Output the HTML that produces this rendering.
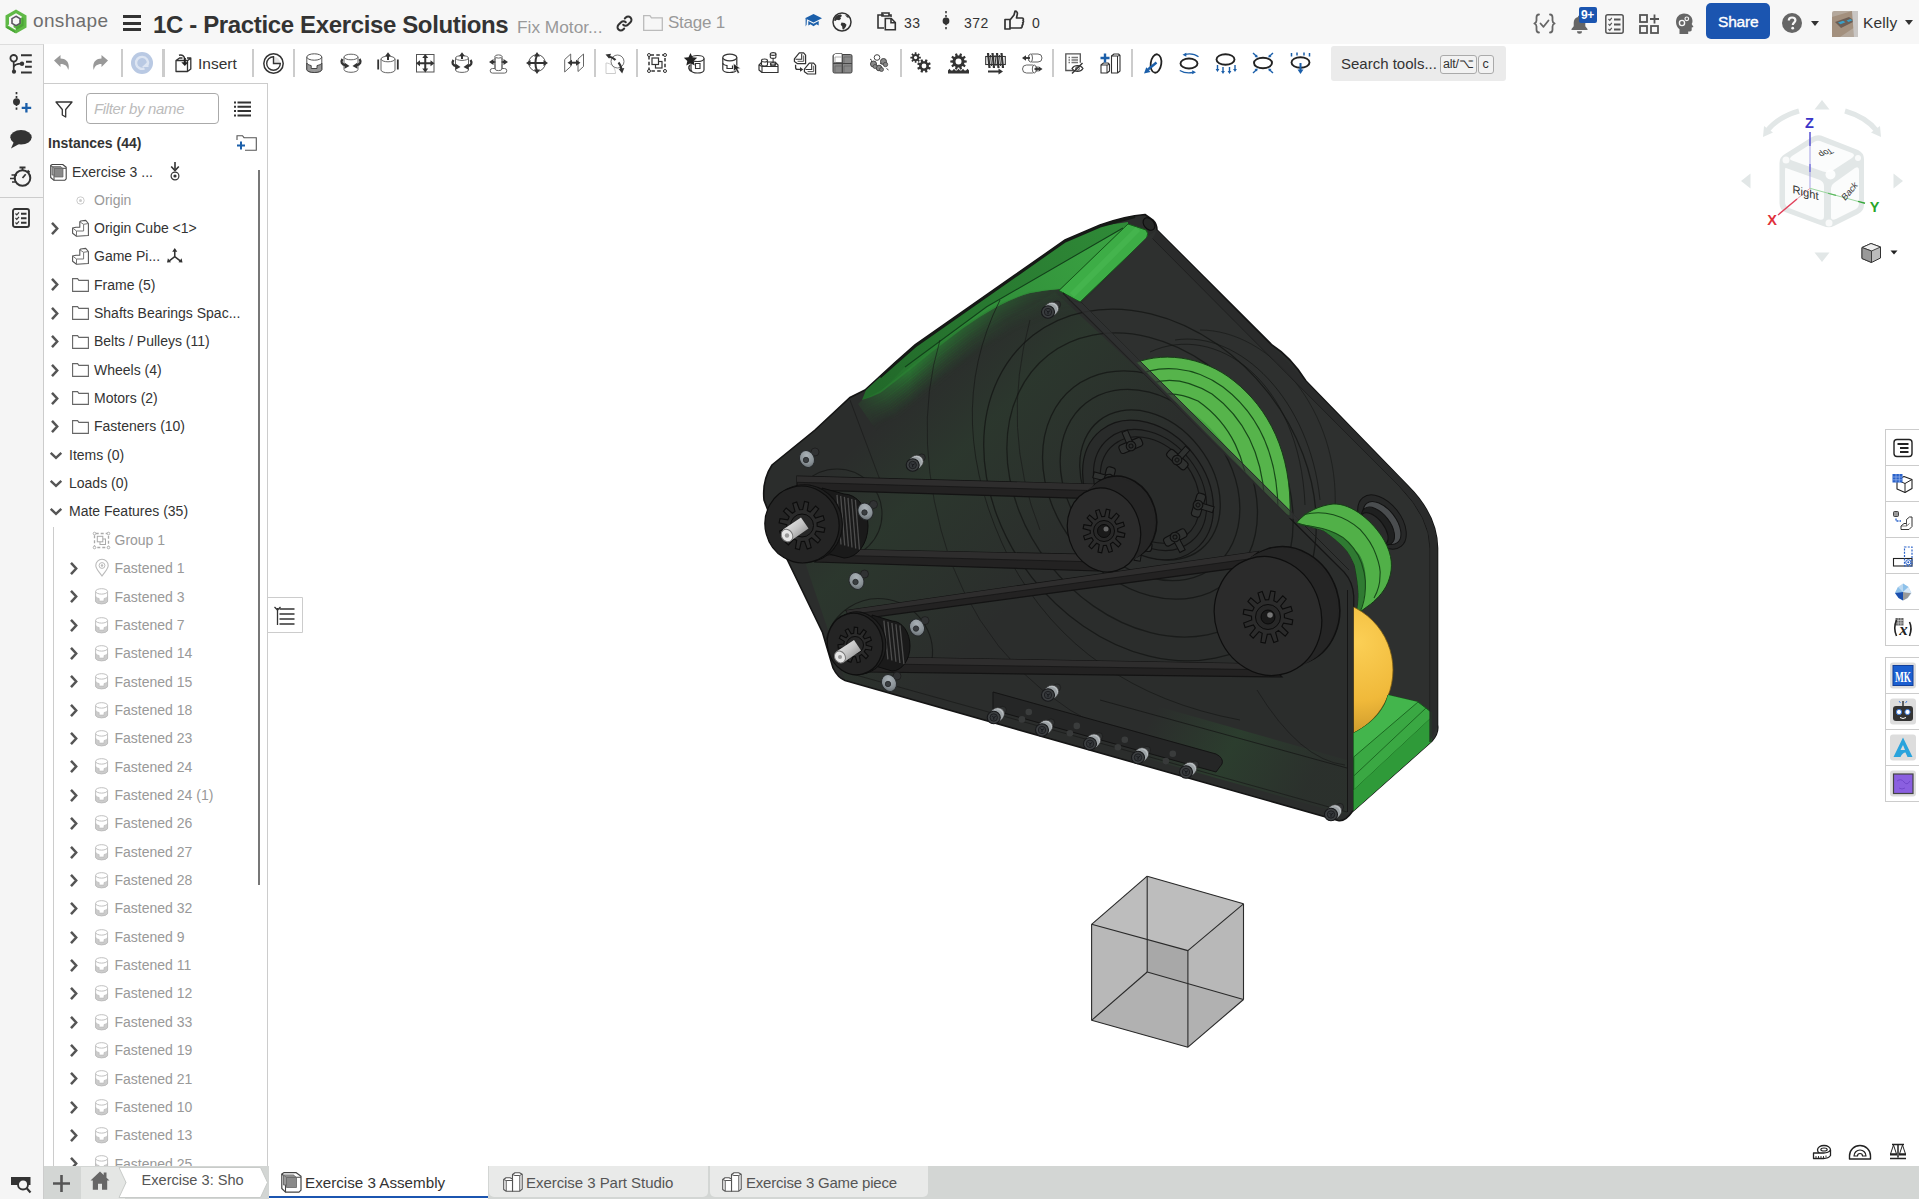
<!DOCTYPE html>
<html lang="en">
<head>
<meta charset="utf-8">
<title>1C - Practice Exercise Solutions</title>
<style>
*{box-sizing:border-box;margin:0;padding:0}
html,body{width:1919px;height:1199px;overflow:hidden;background:#fff;font-family:"Liberation Sans",sans-serif;color:#333}
.abs{position:absolute}
#header{position:absolute;left:0;top:0;width:1919px;height:44px;background:#f7f7f7}
#sidebar{position:absolute;left:0;top:44px;width:44px;height:1155px;background:#f5f5f5;border-right:1px solid #ccc;border-top:1px solid #ddd}
#toolbar{position:absolute;left:44px;top:44px;width:1875px;height:40px;background:#fff}
#panel{position:absolute;left:44px;top:83px;width:224px;height:1084px;background:#fff;border-top:1px solid #ccc;border-right:1px solid #ccc;overflow:hidden}
#canvas{position:absolute;left:268px;top:84px;width:1651px;height:1083px;background:#fff;overflow:hidden}
#tabbar{position:absolute;left:44px;top:1166px;width:1875px;height:33px;background:#d3d6d4}
.t{position:absolute;white-space:nowrap;line-height:1}
svg{position:absolute;overflow:visible}
.sep{position:absolute;top:49px;width:2px;height:28px;background:#ccc}
.row{position:absolute;left:0;height:28px;width:224px;font-size:14.5px;color:#333;white-space:nowrap}
.row .lbl{position:absolute;top:7px;line-height:1}
.row.dim .lbl{color:#999}
</style>
</head>
<body>
<div id="header">
<svg style="left:5px;top:9px" width="22" height="25" viewBox="0 0 22 25">
<polygon points="11,0.500 21.500,6.500 21.500,18.500 11,24.500 0.500,18.500 0.500,6.500" fill="#5fb946"/>
<polygon points="11,4.200 16.800,7.500 16.800,8.500 8.500,13.200 8.500,19 4,16.400 4,8.200" fill="#f7f7f7"/>
<polygon points="11,7.300 15,9.600 15,14.400 11,16.700 7,14.400 7,9.600" fill="#f7f7f7" stroke="#5a5560" stroke-width="1.600"/>
<polygon points="16.800,8.500 18.600,9.500 18.600,16.800 11.200,21 11.200,18.200 16.800,15" fill="#4aa636"/>
<polygon points="2.500,17.400 10,21.700 10,24 1,18.800" fill="#4aa636"/>
<polygon points="2.700,16.300 4,15.600 10.600,19.400 10.600,21" fill="#f7f7f7"/>
</svg>
<div class="t" style="left:33px;top:11px;font-size:19px;color:#6e6e6e;letter-spacing:.35px">onshape</div>
<div class="abs" style="left:123px;top:15px;width:18px;height:3px;background:#333"></div>
<div class="abs" style="left:123px;top:22px;width:18px;height:3px;background:#333"></div>
<div class="abs" style="left:123px;top:28px;width:18px;height:3px;background:#333"></div>
<div class="t" id="title" style="left:153px;top:12.5px;font-size:24px;font-weight:bold;color:#333;letter-spacing:-.36px">1C - Practice Exercise Solutions</div>
<div class="t" style="left:517px;top:19px;font-size:17.3px;color:#999">Fix Motor...</div>
<svg style="left:616px;top:15px" width="17" height="17" viewBox="0 0 17 17" fill="none" stroke="#333" stroke-width="2" stroke-linecap="round"><path d="M7.2 9.8a3.3 3.3 0 0 0 4.7 0l2.6-2.6a3.3 3.3 0 0 0-4.7-4.7l-1 1"/><path d="M9.8 7.2a3.3 3.3 0 0 0-4.7 0L2.5 9.8a3.3 3.3 0 0 0 4.7 4.7l1-1"/></svg>
<svg style="left:643px;top:15px" width="20" height="16" viewBox="0 0 20 16" fill="none" stroke="#bbb" stroke-width="1.3"><path d="M.7 15.3V.7h6.2l1.6 2.2h10.8v12.4z"/></svg>
<div class="t" style="left:668px;top:14px;font-size:17px;color:#999;letter-spacing:-.25px">Stage 1</div>
<svg style="left:804px;top:13px" width="19" height="17" viewBox="0 0 19 17"><path d="M9.5 1L18 5.2 9.5 9.4 1 5.2z" fill="#1b5faa"/><path d="M4.3 8v4.4l2.2-1.1 3 2 3-2 2.2 1.1V8L9.5 10.8z" fill="#1b5faa"/><path d="M1.6 5.6v8l1-2 .3-5.4z" fill="#1b5faa"/></svg>
<svg style="left:832px;top:12px" width="20" height="20" viewBox="0 0 20 20"><circle cx="10" cy="10" r="9" fill="none" stroke="#333" stroke-width="1.5"/><path d="M5 3.5c1.5-1 3-1.3 4-1l1 1.6-1.6 1.2.6 1.4-1.8 1.6-2.4-.6L3.5 9 2 8.5C2.300 6.500 3.300 4.800 5 3.500z" fill="#333"/><path d="M9.500 10.500l3.200.5 1.800 1.700-.8 2.300-2 2.600-1.200-.3-.3-2.800-1.500-1.700z" fill="#333"/><path d="M13 3l2.500.8 1.500 2-1.800-.3z" fill="#333"/></svg>
<svg style="left:877px;top:12px" width="20" height="19" viewBox="0 0 20 19" fill="none" stroke="#333" stroke-width="1.6"><path d="M7 3H1v13h6"/><path d="M5 1h7v3H5z"/><path d="M12 3h2v2"/><path d="M8.300 6.500h6l4 4v7.200h-10z"/><path d="M14 6.800v4h4"/></svg>
<div class="t" style="left:904px;top:16px;font-size:14px;color:#333;letter-spacing:.4px">33</div>
<svg style="left:940px;top:10px" width="12" height="22" viewBox="0 0 12 22"><path d="M6 1v20" stroke="#333" stroke-width="1.5" stroke-dasharray="2.200 1.800"/><circle cx="6" cy="11" r="3.400" fill="#333"/></svg>
<div class="t" style="left:964px;top:16px;font-size:14px;color:#333;letter-spacing:.5px">372</div>
<svg style="left:1004px;top:10px" width="21" height="21" viewBox="0 0 21 21" fill="none" stroke="#333" stroke-width="1.7" stroke-linejoin="round"><path d="M1 9.500h5V19H1z"/><path d="M6 10l4-5 1-3.800c2 0 2.600 1.500 2.300 3L12.500 8H18c1.300 0 1.800 1.300 1 2.300.8.800.6 2-.3 2.500.6.900.3 2-.6 2.500.4 1.400-.3 2.700-2 2.700H9L6 18"/></svg>
<div class="t" style="left:1032px;top:16px;font-size:14px;color:#333">0</div>

<svg style="left:1533px;top:13px" width="23" height="21" viewBox="0 0 23 21" fill="none" stroke="#666" stroke-width="1.800" stroke-linecap="round" stroke-linejoin="round"><path d="M6 1.500C3.800 1.500 3.500 2.500 3.500 4.500v3c0 1.800-.8 2.500-2.200 3 1.400.5 2.200 1.200 2.200 3v3c0 2 .3 3 2.500 3"/><path d="M17 1.500c2.200 0 2.500 1 2.500 3v3c0 1.800.8 2.500 2.200 3-1.400.5-2.200 1.200-2.200 3v3c0 2-.3 3-2.500 3"/><path d="M7.500 10.500l3 3.300 5-6.300"/></svg>
<svg style="left:1570px;top:15px" width="19" height="19" viewBox="0 0 19 19"><path d="M9.500 0.500c.9 0 1.500.6 1.500 1.400 2.800.7 4.300 2.900 4.300 5.800v3.600l2.200 2.800v1H1.500v-1l2.200-2.800V7.700c0-2.900 1.500-5.100 4.300-5.800 0-.8.600-1.400 1.500-1.400z" fill="#666"/><path d="M7 16.200h5a2.500 2.500 0 0 1-5 0z" fill="#666"/></svg>
<div class="abs" style="left:1579px;top:7px;width:18px;height:16px;background:#1b55b0;border-radius:2px"></div>
<div class="t" style="left:1581px;top:9px;font-size:12px;font-weight:bold;color:#fff;letter-spacing:-.3px">9+</div>
<svg style="left:1605px;top:14px" width="19" height="20" viewBox="0 0 19 20" fill="none" stroke="#555" stroke-width="1.500"><rect x=".8" y=".8" width="17.400" height="18.400" rx="2"/><path d="M3.500 5l1.300 1.300 2-2.500M3.500 10l1.300 1.300 2-2.500M3.500 15l1.300 1.300 2-2.500" stroke-width="1.200"/><path d="M9 5.500h6.500M9 10.500h6.500M9 15.500h6.500" stroke-width="1.800"/></svg>
<svg style="left:1639px;top:14px" width="20" height="20" viewBox="0 0 20 20" fill="none" stroke="#555" stroke-width="1.800"><rect x="1" y="1" width="7" height="7"/><rect x="1" y="12" width="7" height="7"/><rect x="12" y="12" width="7" height="7"/><path d="M15.500 0.500v9M11 5h9"/></svg>
<svg style="left:1675px;top:13px" width="19" height="21" viewBox="0 0 19 21"><path d="M9 .5c5 0 8.500 3.200 8.500 7.500 0 1.200-.3 2.200-.8 3l1.800 3-1.800.6v2.200c0 1-.7 1.600-1.700 1.600h-1.800V21H4.500v-4.800C2.500 14.800 1 12 1 9 1 4 4.500.5 9 .5z" fill="#666"/><circle cx="7" cy="10" r="2.600" fill="none" stroke="#f7f7f7" stroke-width="1.400"/><circle cx="11.800" cy="5.800" r="1.800" fill="none" stroke="#f7f7f7" stroke-width="1.200"/></svg>
<div class="abs" style="left:1706px;top:3px;width:64px;height:36px;background:#1b55b0;border-radius:5px"></div>
<div class="t" style="left:1718px;top:14px;font-size:15.500px;color:#fff;-webkit-text-stroke:.35px #fff;letter-spacing:-.2px">Share</div>
<svg style="left:1782px;top:13px" width="20" height="20" viewBox="0 0 20 20"><circle cx="10" cy="10" r="10" fill="#666"/><path d="M6.800 7.600c0-2 1.400-3.100 3.300-3.100 1.900 0 3.300 1.100 3.300 2.800 0 2.300-2.600 2.400-2.600 4.600" fill="none" stroke="#f7f7f7" stroke-width="2.200"/><circle cx="10.700" cy="15.200" r="1.400" fill="#f7f7f7"/></svg>
<svg style="left:1811px;top:21px" width="8" height="5" viewBox="0 0 8 5"><path d="M0 0h8L4 5z" fill="#333"/></svg>
<svg style="left:1832px;top:11px" width="26" height="26" viewBox="0 0 26 26"><rect width="26" height="26" rx="2" fill="#b4a89c"/><path d="M0 6l20-6h6v14L8 26H0z" fill="#a3907e"/><path d="M3 11l14-5 6 4-14 7z" fill="#6d5e55"/><path d="M6 11.500l5-1.800 2.500 1.500-5 2z" fill="#3aa0c8"/><path d="M14.500 9.500l4-1.400 2 1.200-4 1.700z" fill="#3aa0c8"/><path d="M20 0h6v26h-4z" fill="#c9c6c4"/></svg>
<div class="t" style="left:1863px;top:15px;font-size:15.500px;color:#333;letter-spacing:.15px">Kelly</div>
<svg style="left:1905px;top:20px" width="8" height="5" viewBox="0 0 8 5"><path d="M0 0h8L4 5z" fill="#333"/></svg>
</div>
<div id="toolbar"></div>
<!--TB--><div id="toolbar2" style="position:absolute;left:0;top:0;width:1919px;height:0">
<div class="sep" style="left:120.5px;width:2px"></div>
<div class="sep" style="left:162px;width:3px"></div>
<div class="sep" style="left:251.5px;width:2px"></div>
<div class="sep" style="left:292.5px;width:2px"></div>
<div class="sep" style="left:593.5px;width:2px"></div>
<div class="sep" style="left:635.5px;width:2px"></div>
<div class="sep" style="left:899.5px;width:2px"></div>
<div class="sep" style="left:1052px;width:2px"></div>
<div class="sep" style="left:1131px;width:2px"></div>
<svg style="left:54px;top:55px" width="15" height="16" viewBox="0 0 15 16"><path d="M0 5.500L6.500 0v3.400c5 0 8.300 3 8.300 8.400 0 1.200-.2 2.200-.6 3.200-.7-4-3-6.100-7.700-6.100V12z" fill="#999"/></svg>
<svg style="left:92.5px;top:55px" width="15" height="16" viewBox="0 0 15 16"><path d="M15 5.500L8.500 0v3.400c-5 0-8.300 3-8.300 8.400 0 1.200.2 2.200.6 3.200.7-4 3-6.100 7.700-6.100V12z" fill="#999"/></svg>
<svg style="left:131px;top:52px" width="22" height="22" viewBox="0 0 22 22"><circle cx="11" cy="11" r="11" fill="#b9c9e3"/><path d="M13.500 16.300A6 6 0 1 1 16.800 12.500" fill="none" stroke="#dde5f2" stroke-width="2.400"/><path d="M11 15h6.500v-6z" fill="#dde5f2"/></svg>
<svg style="left:174.5px;top:53.5px" width="17" height="19" viewBox="0 0 17 19"><path d="M1 6.500l3.500-2.500h3M12 4h3.800l-3.300 2.800M1 6.500h11.500v11H1zM12.500 17.500l3.300-2.600V4" fill="none" stroke="#333" stroke-width="1.300" stroke-linejoin="round"/><path d="M4 1.200c3-1 5.500.5 5.800 4" fill="none" stroke="#333" stroke-width="1.500"/><path d="M6.300 8.200h7L9.800 12z" fill="#222"/><path d="M9.800 4v5" stroke="#222" stroke-width="2"/></svg>
<svg style="left:262.5px;top:52.5px" width="21" height="21" viewBox="0 0 21 21"><circle cx="10.500" cy="10.500" r="9.700" fill="none" stroke="#333" stroke-width="1.500"/><path d="M10.500 3.700A6.800 6.800 0 0 1 17.300 10.500H10.500z" fill="#e4e4e4"/><path d="M10.500 3.700V10.500H17.300A6.800 6.800 0 1 1 10.500 3.700z" fill="none" stroke="#333" stroke-width="1.400"/></svg>
<svg style="left:305.5px;top:52.5px" width="17" height="20" viewBox="0 0 17 20"><path d="M.8 4v12.500a7.500 3 0 0 0 15 0V4" fill="#fff" stroke="#555" stroke-width="1"/><path d="M.8 10a7.500 3 0 0 0 4.400 2.600V15.500h5.800V12.600A7.500 3 0 0 0 15.800 10v6.500a7.500 3 0 0 1-15 0z" fill="#999" stroke="#444" stroke-width="1"/><ellipse cx="8.300" cy="4" rx="7.500" ry="3.200" fill="#fff" stroke="#555" stroke-width="1"/></svg>
<svg style="left:339.5px;top:52.5px" width="22" height="21" viewBox="0 0 22 21"><path d="M4 4V16.5a7.0 2.8 0 0 0 14 0V4" fill="#fff" stroke="#666" stroke-width="1"/><ellipse cx="11.0" cy="4" rx="7.0" ry="2.8" fill="#fff" stroke="#666" stroke-width="1"/><path d="M2.500 6C.5 9 1.500 11.5 6 12.5" fill="none" stroke="#333" stroke-width="2.300"/><path d="M9.500 13L4.800 9.8 4.600 15.8z" fill="#333"/><path d="M19.500 6C21.500 9 20.500 11.5 16 12.5" fill="none" stroke="#333" stroke-width="2.300"/><path d="M12.500 13L17.200 9.8 17.400 15.8z" fill="#333"/></svg>
<svg style="left:377px;top:51.5px" width="22" height="22" viewBox="0 0 22 22"><path d="M4 7V18a7.0 2.8 0 0 0 14 0V7" fill="#fff" stroke="#666" stroke-width="1"/><ellipse cx="11.0" cy="7" rx="7.0" ry="2.8" fill="#fff" stroke="#666" stroke-width="1"/><path d="M1.200 7.500v10M20.800 7.500v10" stroke="#333" stroke-width="1.800"/><path d="M11 8V3" stroke="#333" stroke-width="2"/><path d="M11 .3l3 4h-6z" fill="#333"/></svg>
<svg style="left:415.5px;top:53.5px" width="19" height="19" viewBox="0 0 19 19"><rect x=".5" y=".5" width="17.500" height="17.500" fill="none" stroke="#555" stroke-width="1"/><path d="M9.250 3v12.500M3 9.250h12.500" stroke="#333" stroke-width="2"/><path d="M9.250 0l3 4h-6zM9.250 18.500l3-4h-6zM0 9.250l4-3v6zM18.500 9.250l-4-3v6z" fill="#333"/></svg>
<svg style="left:451px;top:51.5px" width="22" height="22" viewBox="0 0 22 22"><path d="M4.5 6V18a6.5 2.4 0 0 0 13.0 0V6" fill="#fff" stroke="#666" stroke-width="1"/><ellipse cx="11.0" cy="6" rx="6.5" ry="2.4" fill="#fff" stroke="#666" stroke-width="1"/><path d="M2.500 8C.5 11 1.500 13.5 6 14.5" fill="none" stroke="#333" stroke-width="2.300"/><path d="M9.500 15L4.800 11.8 4.600 17.8z" fill="#333"/><path d="M19.500 8C21.500 11 20.500 13.5 16 14.5" fill="none" stroke="#333" stroke-width="2.300"/><path d="M12.500 15L17.200 11.8 17.400 17.8z" fill="#333"/><path d="M11 7V3" stroke="#333" stroke-width="2"/><path d="M11 .3l3 4h-6z" fill="#333"/></svg>
<svg style="left:489px;top:53.5px" width="19" height="20" viewBox="0 0 19 20"><path d="M3.500 14.500h12a2.300 2.300 0 0 1 0 4.600h-12a2.300 2.300 0 0 1 0-4.600z" fill="#fff" stroke="#666" stroke-width="1"/><path d="M6 2.5V15a3.5 1.6 0 0 0 7 0V2.5" fill="#fff" stroke="#666" stroke-width="1"/><ellipse cx="9.5" cy="2.5" rx="3.5" ry="1.6" fill="#fff" stroke="#666" stroke-width="1"/><path d="M3 8h13" stroke="#333" stroke-width="2"/><path d="M0 8l4.500-3v6zM19 8l-4.500-3v6z" fill="#333"/><path d="M6.500 6v4.500h6V6" fill="#fff" stroke="none"/><path d="M6 4v11M13 4v11" stroke="#666" stroke-width="1"/></svg>
<svg style="left:525.5px;top:52px" width="22" height="22" viewBox="0 0 22 22"><circle cx="11" cy="11" r="8.300" fill="none" stroke="#555" stroke-width="1"/><path d="M3 11h16" stroke="#333" stroke-width="2"/><path d="M11 3c-2 5-2 11 0 16" fill="none" stroke="#333" stroke-width="2"/><path d="M0 11l4.500-3v6zM22 11l-4.500-3v6zM11 0l3 4.500h-6zM11 22l3-4.500h-6z" fill="#333"/></svg>
<svg style="left:564px;top:53px" width="20" height="20" viewBox="0 0 20 20"><path d="M.7 6.500L6.700 1v12.500L.7 19zM14 6L19.500 1v12.500L14 18.500z" fill="#fff" stroke="#666" stroke-width="1"/><path d="M6 9.700h8" stroke="#333" stroke-width="2"/><path d="M3.500 9.700l4.500-3v6zM16.500 9.700l-4.500-3v6z" fill="#333"/></svg>
<svg style="left:605px;top:52.5px" width="20" height="21" viewBox="0 0 20 21"><path d="M1 20.500V10c5 0 9.500 4.500 9.500 10.500z" fill="#fff" stroke="#ccc" stroke-width="1"/><circle cx="12.500" cy="8.500" r="6.500" fill="none" stroke="#777" stroke-width="1"/><path d="M3.500 3.500C6.500 3.800 8.500 5 10.500 7" fill="none" stroke="#333" stroke-width="2.200"/><path d="M.5 1.500l5.500-.8-1.800 5z" fill="#333"/><path d="M13.500 9.500c1.800 2 2.800 4.500 3.200 7.500" fill="none" stroke="#333" stroke-width="2.200"/><path d="M17.200 20.500l-3.500-4.500 5.600-1z" fill="#333"/></svg>
<svg style="left:647px;top:53px" width="20" height="20" viewBox="0 0 20 20"><rect x="2" y="2" width="16" height="16" fill="none" stroke="#333" stroke-width="1.500" stroke-dasharray="3.500 2.300" stroke-dashoffset="-1.500"/><circle cx="2" cy="2" r="1.500" fill="#fff" stroke="#333"/><circle cx="18" cy="2" r="1.500" fill="#fff" stroke="#333"/><circle cx="2" cy="18" r="1.500" fill="#fff" stroke="#333"/><circle cx="18" cy="18" r="1.500" fill="#fff" stroke="#333"/><rect x="8.500" y="8.500" width="6.500" height="6.500" fill="#fff" stroke="#333" stroke-width="1.200"/><rect x="5" y="5" width="6.500" height="6.500" fill="#fff" stroke="#333" stroke-width="1.200"/></svg>
<svg style="left:683.5px;top:52.5px" width="21" height="21" viewBox="0 0 21 21"><path d="M7 5.500v11.500a6.500 3 0 0 0 13 0V5.500" fill="#fff" stroke="#333" stroke-width="1.200"/><ellipse cx="13.500" cy="5.500" rx="6.500" ry="3" fill="#fff" stroke="#333" stroke-width="1.200"/><path d="M11.500 10.500h4.500v5h-4.500z" fill="#fff" stroke="#333" stroke-width="1.100"/><path d="M6 12c-2 2-1.500 5 2 6.500" fill="none" stroke="#333" stroke-width="1.500"/><path d="M6.500 0l2 4.300 4.700.5-3.500 3.200 1 4.600-4.200-2.400-4.200 2.400 1-4.600L-.2 4.800l4.700-.5z" fill="#222"/></svg>
<svg style="left:721.5px;top:52.5px" width="19" height="21" viewBox="0 0 19 21"><path d="M.8 4.500v12a7 3 0 0 0 14 0v-12" fill="#fff" stroke="#333" stroke-width="1.200"/><ellipse cx="7.800" cy="4.500" rx="7" ry="3.300" fill="#fff" stroke="#333" stroke-width="1.200"/><path d="M.8 10a7 3 0 0 0 4.200 2.600V15.500h5.500v-3" fill="none" stroke="#333" stroke-width="1.200"/><path d="M11.500 10.500l7 5-3 .3 2 3.800-1.700.9-2-3.900-2.100 2z" fill="#222" stroke="#fff" stroke-width=".5"/></svg>
<svg style="left:757.5px;top:51.5px" width="21" height="21" viewBox="0 0 21 21"><path d="M1 13l3-3h13l3 3v7.500H4L1 18z" fill="#fff" stroke="#333" stroke-width="1.200" stroke-linejoin="round"/><path d="M4 20.500v-6h16M4 14.500L1 13" fill="none" stroke="#333" stroke-width="1.100"/><path d="M3.500 8.500v4a3 1.500 0 0 0 6 0v-4" fill="#fff" stroke="#333" stroke-width="1.100"/><ellipse cx="6.500" cy="8.500" rx="3" ry="1.500" fill="#fff" stroke="#333" stroke-width="1.100"/><path d="M12.500 11.800v1a2.500 1.200 0 0 0 5 0v-1" fill="#fff" stroke="#333" stroke-width="1.100"/><ellipse cx="15" cy="11.800" rx="2.500" ry="1.200" fill="#fff" stroke="#333" stroke-width="1.100"/><path d="M12.300 2v3a2.800 1.400 0 0 0 5.600 0v-3" fill="#fff" stroke="#333" stroke-width="1.100"/><ellipse cx="15.100" cy="2" rx="2.800" ry="1.400" fill="#fff" stroke="#333" stroke-width="1.100"/><path d="M15.100 6.500v3.500" stroke="#333" stroke-width="1"/></svg>
<svg style="left:794px;top:51.5px" width="22" height="23" viewBox="0 0 22 23"><path d="M.4 6.800L5.300.8H9.600L11.600 3.100V11.700H3.600L.4 9.400Z" fill="#fff" stroke="#333" stroke-width="1.200" stroke-linejoin="round"/><path d="M1.500 7.200H7.700V1.800" fill="none" stroke="#333" stroke-width="1.100"/><path d="M3.600 9.300H9.700V3.500" fill="none" stroke="#555" stroke-width="1"/><g transform="translate(10 10.300)"><path d="M.4 6.800L5.300.8H9.600L11.600 3.100V11.700H3.600L.4 9.400Z" fill="#fff" stroke="#333" stroke-width="1.200" stroke-linejoin="round"/><path d="M1.500 7.200H7.700V1.800" fill="none" stroke="#333" stroke-width="1.100"/><path d="M3.600 9.300H9.700V3.500" fill="none" stroke="#555" stroke-width="1"/></g><path d="M1.600 12.800V15.500Q1.600 17.400 3.500 17.400H7" fill="none" stroke="#333" stroke-width="1.300"/><path d="M9.300 17.400l-3.300-2.300v4.600z" fill="#333"/></svg>
<svg style="left:831.5px;top:52.5px" width="21" height="21" viewBox="0 0 21 21"><rect x="1" y="1.500" width="19" height="18.500" rx="1.500" fill="#888" stroke="#444" stroke-width="1"/><path d="M1 10.500h19M10.300 1.500v18.500" stroke="#444" stroke-width="1.200"/><path d="M1.500 2l2-1.500h6.500v9h-8.500z" fill="#fff" stroke="#555" stroke-width=".8"/><path d="M3 4h6.500M3 4v6" stroke="#999" stroke-width=".8"/><path d="M12 4h7M12 4v6M3 13h7M3 13v6M12 13h7M12 13v6" stroke="#666" stroke-width=".7"/></svg>
<svg style="left:869px;top:53.5px" width="21" height="18" viewBox="0 0 21 18"><circle cx="4.500" cy="10" r="3" fill="#888" stroke="#444"/><circle cx="8" cy="3.500" r="2.800" fill="#fff" stroke="#444"/><circle cx="10" cy="14" r="2.800" fill="#888" stroke="#444"/><circle cx="14.500" cy="7.500" r="3" fill="#888" stroke="#444"/><circle cx="6" cy="12.500" r="2" fill="#888" stroke="#444" stroke-width=".8"/><circle cx="16.500" cy="10.500" r="2.200" fill="#888" stroke="#444" stroke-width=".8"/><circle cx="12.500" cy="15.500" r="2" fill="#888" stroke="#444" stroke-width=".8"/><path d="M1 5l2 1.500M11 9l1.500 1M17.500 14.500l2 1.500M2 8l1-1" stroke="#444" stroke-width="1"/></svg>
<svg style="left:910px;top:52px" width="22" height="22" viewBox="0 0 22 22"><path d="M9.09 4.70 L10.83 4.77 L10.83 6.43 L9.09 6.50 L8.70 7.43 L9.89 8.72 L8.72 9.89 L7.43 8.70 L6.50 9.09 L6.43 10.83 L4.77 10.83 L4.70 9.09 L3.77 8.70 L2.48 9.89 L1.31 8.72 L2.50 7.43 L2.11 6.50 L0.37 6.43 L0.37 4.77 L2.11 4.70 L2.50 3.77 L1.31 2.48 L2.48 1.31 L3.77 2.50 L4.70 2.11 L4.77 0.37 L6.43 0.37 L6.50 2.11 L7.43 2.50 L8.72 1.31 L9.89 2.48 L8.70 3.77Z M7.30 5.60 A1.7 1.7 0 1 0 3.90 5.60 A1.7 1.7 0 1 0 7.30 5.60Z" fill="#333" fill-rule="evenodd"/><path d="M18.85 14.68 L20.81 15.62 L19.98 17.64 L17.93 16.93 L16.95 17.91 L17.67 19.96 L15.65 20.80 L14.70 18.85 L13.32 18.85 L12.38 20.81 L10.36 19.98 L11.07 17.93 L10.09 16.95 L8.04 17.67 L7.20 15.65 L9.15 14.70 L9.15 13.32 L7.19 12.38 L8.02 10.36 L10.07 11.07 L11.05 10.09 L10.33 8.04 L12.35 7.20 L13.30 9.15 L14.68 9.15 L15.62 7.19 L17.64 8.02 L16.93 10.07 L17.91 11.05 L19.96 10.33 L20.80 12.35 L18.85 13.30Z M16.40 14.00 A2.4 2.4 0 1 0 11.60 14.00 A2.4 2.4 0 1 0 16.40 14.00Z" fill="#333" fill-rule="evenodd"/></svg>
<svg style="left:947.5px;top:51.5px" width="21" height="22" viewBox="0 0 21 22"><path d="M16.38 8.30 L18.73 8.46 L18.73 10.54 L16.38 10.70 L15.96 11.99 L17.77 13.50 L16.55 15.18 L14.55 13.93 L13.46 14.72 L14.03 17.01 L12.06 17.65 L11.18 15.46 L9.82 15.46 L8.94 17.65 L6.97 17.01 L7.54 14.72 L6.45 13.93 L4.45 15.18 L3.23 13.50 L5.04 11.99 L4.62 10.70 L2.27 10.54 L2.27 8.46 L4.62 8.30 L5.04 7.01 L3.23 5.50 L4.45 3.82 L6.45 5.07 L7.54 4.28 L6.97 1.99 L8.94 1.35 L9.82 3.54 L11.18 3.54 L12.06 1.35 L14.03 1.99 L13.46 4.28 L14.55 5.07 L16.55 3.82 L17.77 5.50 L15.96 7.01Z M13.50 9.50 A3 3 0 1 0 7.50 9.50 A3 3 0 1 0 13.50 9.50Z" fill="#333" fill-rule="evenodd"/><path d="M0 21.500v-3l1.500-1.800 1.500 1.800h1.500l1.500-1.800 1.500 1.800h1.500l1.500-1.800 1.500 1.800h1.500l1.500-1.800 1.500 1.800h1.500l1.500-1.800 1.500 1.800v3z" fill="#333"/></svg>
<svg style="left:984.5px;top:51.5px" width="21" height="22" viewBox="0 0 21 22"><rect x=".7" y="4.500" width="19.600" height="8" fill="#fff" stroke="#333" stroke-width="1.100"/><path d="M3 1l1.500 15M7.500 1l1.500 15M12 1l1.500 15M16.500 1l1.500 15" stroke="#333" stroke-width="2.200"/><path d="M5.500 3l1 11M10 3l1 11M14.500 3l1 11" stroke="#333" stroke-width="1"/><path d="M3 19.500h11" stroke="#333" stroke-width="2"/><path d="M18 19.500l-4.500-3v6z" fill="#333"/></svg>
<svg style="left:1021.5px;top:52.5px" width="21" height="21" viewBox="0 0 21 21"><rect x="6" y="1" width="14" height="8" rx="4" fill="#fff" stroke="#666" stroke-width="1"/><ellipse cx="8.500" cy="5" rx="2" ry="4" fill="#fff" stroke="#666"/><path d="M3 5h5" stroke="#333" stroke-width="1.800"/><path d="M0 5l4-2.800v5.600z" fill="#333"/><rect x=".5" y="12" width="14" height="8" rx="4" fill="#fff" stroke="#666" stroke-width="1"/><ellipse cx="12.300" cy="16" rx="2" ry="4" fill="#fff" stroke="#666"/><path d="M12.500 16h5" stroke="#333" stroke-width="1.800"/><path d="M20.500 16l-4-2.800v5.600z" fill="#333"/><path d="M15 13.500v5" stroke="#333" stroke-width="1.200"/></svg>
<svg style="left:1064.5px;top:52.5px" width="19" height="21" viewBox="0 0 19 21"><path d="M8 17.500H.8V.8h14.500v9" fill="none" stroke="#555" stroke-width="1.300"/><path d="M3.500 4.500h1.500M3.500 7h1.500M3.500 9.500h1.500M6.500 4.500h6.500M6.500 7h6.500M6.500 9.500h6.500" stroke="#777" stroke-width="1.300"/><path d="M7 15.500c2.500-4 8.500-4 11 0-2.500 4-8.500 4-11 0z" fill="#fff" stroke="#333" stroke-width="1.200"/><circle cx="12.500" cy="15.500" r="1.800" fill="none" stroke="#333"/><path d="M7 20.500L17.500 10" stroke="#333" stroke-width="1.500"/></svg>
<svg style="left:1099.5px;top:52.5px" width="21" height="21" viewBox="0 0 21 21"><path d="M11.500 3l2.500-2h4.500l1.500 1.500v15.500l-2.500 2h-6z" fill="#fff" stroke="#333" stroke-width="1.100" stroke-linejoin="round"/><path d="M11.500 3h6v17M17.500 3l2.500-.5" fill="none" stroke="#333" stroke-width="1"/><path d="M1 12l2.500-2h4.500l1.500 1.500v6.500l-2.500 2h-6z" fill="#fff" stroke="#333" stroke-width="1.100" stroke-linejoin="round"/><path d="M1 12h6v8M7 12l2.500-.5" fill="none" stroke="#333" stroke-width="1"/><path d="M5 .5v9M.5 5h9" stroke="#1b5faa" stroke-width="2.400"/></svg>
<svg style="left:1143.5px;top:52.5px" width="19" height="21" viewBox="0 0 19 21"><ellipse cx="12" cy="10.500" rx="5.300" ry="9.300" fill="none" stroke="#222" stroke-width="1.800" transform="rotate(8 12 10.500)"/><path d="M12.500 9.500L4 16.500" stroke="#1b5faa" stroke-width="2.400"/><path d="M0 20.500l2.300-6.300 4.200 4.800z" fill="#1b5faa"/></svg>
<svg style="left:1179px;top:51.5px" width="21" height="22" viewBox="0 0 21 22"><ellipse cx="10" cy="11.500" rx="8.500" ry="5" fill="none" stroke="#222" stroke-width="1.900"/><path d="M6 2.300c5-1 10-.3 13.500 2.500" fill="none" stroke="#1b5faa" stroke-width="1.300"/><path d="M3.500 2.700l3.800-2v4z" fill="#1b5faa"/><path d="M.8 18.500c4 2.300 9 2.800 13 2" fill="none" stroke="#1b5faa" stroke-width="1.300"/><path d="M17 20.200l-3.800 2v-4z" fill="#1b5faa"/></svg>
<svg style="left:1215px;top:52.5px" width="22" height="21" viewBox="0 0 22 21"><ellipse cx="10.500" cy="6.500" rx="9" ry="5.300" fill="none" stroke="#222" stroke-width="1.900"/><path d="M2.500 12v5M8 14v5M14.500 14v5M20 12v5" stroke="#1b5faa" stroke-width="1.400"/><path d="M2.500 19l-1.900-3h3.800zM8 21l-1.900-3h3.800zM14.500 21l-1.900-3h3.800zM20 19l-1.900-3h3.800z" fill="#1b5faa"/></svg>
<svg style="left:1251.5px;top:52px" width="22" height="22" viewBox="0 0 22 22"><ellipse cx="11" cy="11" rx="9" ry="5.300" fill="none" stroke="#222" stroke-width="1.900"/><path d="M1 1l3.500 3.200M21 1l-3.500 3.200M1 21l3.500-3.200M21 21l-3.500-3.200" stroke="#1b5faa" stroke-width="1.400"/><path d="M5.800 5.500l-3.300-.5 2.500-2.600zM16.200 5.500l3.300-.5-2.500-2.600zM5.800 16.500l-3.300.5 2.500 2.600zM16.200 16.500l3.300.5-2.500 2.600z" fill="#1b5faa"/></svg>
<svg style="left:1289.5px;top:52px" width="21" height="22" viewBox="0 0 21 22"><ellipse cx="10.500" cy="10.500" rx="9" ry="5.300" fill="none" stroke="#222" stroke-width="1.900"/><path d="M1.500 1v3.500M7 .5v3M14 .5v3M19.500 1v3.500" stroke="#1b5faa" stroke-width="1.500"/><path d="M10.500 11v7" stroke="#1b5faa" stroke-width="2"/><path d="M10.500 22l-3-4.500h6z" fill="#1b5faa"/></svg>
<div class="t" style="left:198px;top:56px;font-size:15.500px;color:#333">Insert</div>
<div class="abs" style="left:1331px;top:46px;width:175px;height:35px;background:#ebebeb;border-radius:3px"></div>
<div class="t" style="left:1341px;top:55.500px;font-size:15px;color:#333">Search tools...</div>
<div class="abs" style="left:1440px;top:54.500px;width:36.500px;height:19.500px;background:#f2f2f2;border:1px solid #aaa;border-bottom-width:1.500px;border-radius:3px"></div>
<div class="t" style="left:1443px;top:58px;font-size:12.500px;color:#333;letter-spacing:-.2px">alt/⌥</div>
<div class="abs" style="left:1477.500px;top:54.500px;width:16.500px;height:19.500px;background:#f2f2f2;border:1px solid #aaa;border-bottom-width:1.500px;border-radius:3px"></div>
<div class="t" style="left:1482.500px;top:58px;font-size:12.500px;color:#333">c</div>
</div><!--/TB-->
<!--SIDE--><div id="sidebar">
<div style="position:absolute;left:0;top:-45px;width:44px;height:1199px">
<svg style="left:9px;top:53px" width="24" height="22" viewBox="0 0 24 22"><path d="M4.700 8.500v10.200M4.700 14.500c0-3 2.500-3.800 8.500-3.800" fill="none" stroke="#333" stroke-width="1.700"/><circle cx="4.700" cy="5.300" r="3.300" fill="#f5f5f5" stroke="#333" stroke-width="1.800"/><circle cx="5" cy="18.700" r="2.100" fill="#333"/><circle cx="13" cy="10.700" r="2.200" fill="#333"/><path d="M12 2.200h10.800M17 8.700h5.800M16 13.700h6.800M12 19.500h10.800" stroke="#333" stroke-width="2"/></svg>
<svg style="left:11px;top:91px" width="22" height="22" viewBox="0 0 22 22"><path d="M5.500 1v19.500" stroke="#333" stroke-width="1.700" stroke-dasharray="2.200 1.700"/><circle cx="5.500" cy="10.700" r="3.500" fill="#333"/><path d="M15.400 12v9.500M10.700 16.800h9.500" stroke="#1b5faa" stroke-width="2.300"/></svg>
<svg style="left:10px;top:130px" width="22" height="19" viewBox="0 0 22 19"><ellipse cx="11" cy="7.300" rx="10.700" ry="7.200" fill="#333"/><path d="M4 11.500L1 18.500l8.500-4.700z" fill="#333"/></svg>
<svg style="left:10px;top:166px" width="22" height="22" viewBox="0 0 22 22"><circle cx="12.500" cy="12" r="7.800" fill="none" stroke="#333" stroke-width="2"/><path d="M9.500 1.500h6M12.500 1.500v3M17.500 4.500l2 2" stroke="#333" stroke-width="1.800"/><path d="M12.500 12l3.200-3.800" stroke="#333" stroke-width="1.700"/><path d="M1.500 9h5.500M0 12.500h5.500M2 16h4.500" stroke="#333" stroke-width="1.400"/></svg>
<div class="abs" style="left:0;top:196.500px;width:43px;height:1px;background:#ccc"></div>
<svg style="left:12px;top:207.500px" width="18" height="20" viewBox="0 0 18 20"><rect x="1" y="1" width="16" height="18" rx="2" fill="none" stroke="#333" stroke-width="1.900"/><path d="M3.500 5.500l1.300 1.300 2.200-2.500M3.500 10l1.300 1.300 2.200-2.500M3.500 14.500l1.300 1.300 2.200-2.500" fill="none" stroke="#333" stroke-width="1.200"/><path d="M9 5.700h5.500M9 10.200h5.500M9 14.700h5.500" stroke="#333" stroke-width="1.900"/></svg>
<svg style="left:11px;top:1177px" width="20" height="16" viewBox="0 0 20 16"><path d="M0 0h19.500v8H0z" fill="#333"/><circle cx="12" cy="7.500" r="5" fill="#f5f5f5" stroke="#333" stroke-width="1.900"/><path d="M15.500 11l4 4.500" stroke="#333" stroke-width="2.200"/></svg>
</div></div><!--/SIDE-->
<!--PANEL--><div id="panel">
<div style="position:absolute;left:-44px;top:-83px;width:268px;height:1250px">
<svg style="left:54.500px;top:100px" width="18" height="18" viewBox="0 0 18 18"><path d="M1 1h16l-6.300 7.500V16l-3.400-2V8.500z" fill="none" stroke="#333" stroke-width="1.300" stroke-linejoin="round"/></svg>
<div class="abs" style="left:86px;top:92px;width:133px;height:31px;border:1px solid #aaa;border-radius:4px;background:#fff"></div>
<div class="t" style="left:94px;top:100px;font-size:15px;font-style:italic;color:#bbb;letter-spacing:-.35px">Filter by name</div>
<svg style="left:233.500px;top:99.500px" width="17" height="16" viewBox="0 0 17 16"><path d="M0 1.500h2M0 5.800h2M0 10.100h2M0 14.400h2" stroke="#333" stroke-width="2"/><path d="M3.500 1.500h13.500M3.500 5.800h13.500M3.500 10.100h13.500M3.500 14.400h13.500" stroke="#333" stroke-width="2"/></svg>
<div class="t" style="left:48px;top:135px;font-size:14px;font-weight:bold;color:#333">Instances (44)</div>
<svg style="left:235.500px;top:134px" width="21" height="16" viewBox="0 0 21 16"><path d="M1 5V.7h5.500l1.500 2h12.300v12.600H9" fill="none" stroke="#555" stroke-width="1.100"/><path d="M5 6.500v8M1 10.500h8" stroke="#1b5faa" stroke-width="2"/></svg>
<div class="abs" style="left:257.500px;top:169px;width:2px;height:715px;background:#777"></div>
<div class="abs" style="left:52.700px;top:526px;width:1.500px;height:660px;background:#ccc"></div>
<svg style="left:50px;top:162.6px" width="17" height="17" viewBox="0 0 17 17"><path d="M.7 1.500l1.500-1h10.500l3.500 2.800v11.500l-1.500 1.500H4L.7 13.500z" fill="#fff" stroke="#444" stroke-width="1.100" stroke-linejoin="round"/><path d="M.7 1.500L4 4.300h12M4 4.300v12" fill="none" stroke="#444" stroke-width="1"/><path d="M2 2.500h8.500v8.500H2z" fill="#999" stroke="#666" stroke-width=".8"/><path d="M2 2.500l2.500 2h8.500l-2.500-2M4.500 4.500v8.500h8.500V4.500" fill="#888" stroke="#666" stroke-width=".7"/></svg>
<svg style="left:170px;top:160.6px" width="10" height="19" viewBox="0 0 10 19"><path d="M5 0v7" stroke="#333" stroke-width="1.600"/><path d="M1.200 4.500L5 8.500l3.800-4" fill="none" stroke="#333" stroke-width="1.600"/><circle cx="5" cy="14" r="3.900" fill="#fff" stroke="#333" stroke-width="1.200"/><circle cx="5" cy="14" r="1.600" fill="#333"/></svg>
<div class="t" style="left:72px;top:164.0px;font-size:14px;color:#333">Exercise 3 ...</div>
<svg style="left:76px;top:194.7px" width="9" height="9" viewBox="0 0 9 9"><circle cx="4.500" cy="4.500" r="3.700" fill="none" stroke="#ccc" stroke-width="1"/><circle cx="4.500" cy="4.500" r="1.500" fill="#ccc"/></svg>
<div class="t" style="left:94px;top:191.6px;font-size:14px;color:#999">Origin</div>
<svg style="left:72px;top:218.7px" width="17" height="17" viewBox="0 0 17 17"><path d="M.6 8L4 7.200H7.800V1.800L8.700 1 13.700.4 16.400 3.500V15.500L4.500 16.200.6 13.200Z" fill="#fff" stroke="#555" stroke-width="1.100" stroke-linejoin="round"/><path d="M.6 8L4.500 11H11.600V4.300L7.800 1.800M11.600 4.300L16.400 3.500M4.500 11V16.200" fill="none" stroke="#777" stroke-width="1"/></svg>
<svg style="left:49.5px;top:219.7px" width="9" height="15" viewBox="0 0 9 15"><path d="M2 1.800l5.200 5.700-5.200 5.700" fill="none" stroke="#555" stroke-width="2.500"/></svg>
<div class="t" style="left:94px;top:219.9px;font-size:14px;color:#333">Origin Cube &lt;1&gt;</div>
<svg style="left:72px;top:247.1px" width="17" height="17" viewBox="0 0 17 17"><path d="M.6 8L4 7.200H7.800V1.800L8.700 1 13.700.4 16.400 3.500V15.500L4.500 16.200.6 13.200Z" fill="#fff" stroke="#555" stroke-width="1.100" stroke-linejoin="round"/><path d="M.6 8L4.500 11H11.600V4.300L7.800 1.800M11.600 4.300L16.400 3.500M4.500 11V16.200" fill="none" stroke="#777" stroke-width="1"/></svg>
<svg style="left:167px;top:247.3px" width="15.500" height="15.500" viewBox="0 0 17 17"><path d="M8.500 2v7.500M8.500 9.500l-6 4.500M8.500 9.500l6 4.500" stroke="#333" stroke-width="1.700" fill="none"/><path d="M8.500 0l2.800 4h-5.600zM0 16l1-4.700 3.400 4.200zM17 16l-1-4.700-3.400 4.200z" fill="#333"/></svg>
<div class="t" style="left:94px;top:248.3px;font-size:14px;color:#333">Game Pi...</div>
<svg style="left:72px;top:276.9px" width="17" height="14" viewBox="0 0 17 14"><path d="M.6 13.400V.6h5l1.300 1.800h9.500v11z" fill="#fff" stroke="#666" stroke-width="1.100"/></svg>
<svg style="left:49.5px;top:276.4px" width="9" height="15" viewBox="0 0 9 15"><path d="M2 1.800l5.200 5.700-5.200 5.700" fill="none" stroke="#555" stroke-width="2.500"/></svg>
<div class="t" style="left:94px;top:276.6px;font-size:14px;color:#333">Frame (5)</div>
<svg style="left:72px;top:305.3px" width="17" height="14" viewBox="0 0 17 14"><path d="M.6 13.400V.6h5l1.300 1.800h9.500v11z" fill="#fff" stroke="#666" stroke-width="1.100"/></svg>
<svg style="left:49.5px;top:304.8px" width="9" height="15" viewBox="0 0 9 15"><path d="M2 1.800l5.200 5.700-5.200 5.700" fill="none" stroke="#555" stroke-width="2.500"/></svg>
<div class="t" style="left:94px;top:305.0px;font-size:14px;color:#333">Shafts Bearings Spac...</div>
<svg style="left:72px;top:333.6px" width="17" height="14" viewBox="0 0 17 14"><path d="M.6 13.400V.6h5l1.300 1.800h9.500v11z" fill="#fff" stroke="#666" stroke-width="1.100"/></svg>
<svg style="left:49.5px;top:333.1px" width="9" height="15" viewBox="0 0 9 15"><path d="M2 1.800l5.200 5.700-5.200 5.700" fill="none" stroke="#555" stroke-width="2.500"/></svg>
<div class="t" style="left:94px;top:333.3px;font-size:14px;color:#333">Belts / Pulleys (11)</div>
<svg style="left:72px;top:362.0px" width="17" height="14" viewBox="0 0 17 14"><path d="M.6 13.400V.6h5l1.300 1.800h9.500v11z" fill="#fff" stroke="#666" stroke-width="1.100"/></svg>
<svg style="left:49.5px;top:361.5px" width="9" height="15" viewBox="0 0 9 15"><path d="M2 1.800l5.200 5.700-5.200 5.700" fill="none" stroke="#555" stroke-width="2.500"/></svg>
<div class="t" style="left:94px;top:361.7px;font-size:14px;color:#333">Wheels (4)</div>
<svg style="left:72px;top:390.3px" width="17" height="14" viewBox="0 0 17 14"><path d="M.6 13.400V.6h5l1.300 1.800h9.500v11z" fill="#fff" stroke="#666" stroke-width="1.100"/></svg>
<svg style="left:49.5px;top:389.8px" width="9" height="15" viewBox="0 0 9 15"><path d="M2 1.800l5.200 5.700-5.200 5.700" fill="none" stroke="#555" stroke-width="2.500"/></svg>
<div class="t" style="left:94px;top:390.0px;font-size:14px;color:#333">Motors (2)</div>
<svg style="left:72px;top:418.7px" width="17" height="14" viewBox="0 0 17 14"><path d="M.6 13.400V.6h5l1.300 1.800h9.500v11z" fill="#fff" stroke="#666" stroke-width="1.100"/></svg>
<svg style="left:49.5px;top:418.2px" width="9" height="15" viewBox="0 0 9 15"><path d="M2 1.800l5.200 5.700-5.200 5.700" fill="none" stroke="#555" stroke-width="2.500"/></svg>
<div class="t" style="left:94px;top:418.4px;font-size:14px;color:#333">Fasteners (10)</div>
<svg style="left:48.5px;top:449.5px" width="14" height="9" viewBox="0 0 14 9"><path d="M1.700 1.800l5.300 5 5.300-5" fill="none" stroke="#555" stroke-width="2.400"/></svg>
<div class="t" style="left:69px;top:446.7px;font-size:14px;color:#333">Items (0)</div>
<svg style="left:48.5px;top:477.9px" width="14" height="9" viewBox="0 0 14 9"><path d="M1.700 1.800l5.300 5 5.300-5" fill="none" stroke="#555" stroke-width="2.400"/></svg>
<div class="t" style="left:69px;top:475.1px;font-size:14px;color:#333">Loads (0)</div>
<svg style="left:48.5px;top:506.2px" width="14" height="9" viewBox="0 0 14 9"><path d="M1.700 1.800l5.300 5 5.300-5" fill="none" stroke="#555" stroke-width="2.400"/></svg>
<div class="t" style="left:69px;top:503.4px;font-size:14px;color:#333">Mate Features (35)</div>
<svg style="left:93px;top:530.6px" width="17" height="17" viewBox="0 0 17 17"><rect x="1.500" y="1.500" width="14" height="14" fill="none" stroke="#aaa" stroke-width="1.300" stroke-dasharray="3 2" stroke-dashoffset="-1.200"/><circle cx="1.500" cy="1.500" r="1.300" fill="#fff" stroke="#aaa" stroke-width=".9"/><circle cx="15.500" cy="1.500" r="1.300" fill="#fff" stroke="#aaa" stroke-width=".9"/><circle cx="1.500" cy="15.500" r="1.300" fill="#fff" stroke="#aaa" stroke-width=".9"/><circle cx="15.500" cy="15.500" r="1.300" fill="#fff" stroke="#aaa" stroke-width=".9"/><rect x="7" y="7" width="5.500" height="5.500" fill="#fff" stroke="#aaa" stroke-width="1"/><rect x="4.300" y="4.300" width="5.500" height="5.500" fill="#fff" stroke="#aaa" stroke-width="1"/></svg>
<div class="t" style="left:114.5px;top:531.8px;font-size:14px;color:#999">Group 1</div>
<svg style="left:94.500px;top:557.9px" width="14" height="18" viewBox="0 0 14 18"><path d="M7 17C4 12.500.8 10 .8 6.500a6.200 6.200 0 0 1 12.400 0C13.200 10 10 12.500 7 17z" fill="#fff" stroke="#bbb" stroke-width="1.100"/><circle cx="7" cy="6.500" r="2.900" fill="none" stroke="#bbb" stroke-width="1"/><circle cx="7" cy="6.500" r="1.200" fill="#bbb"/></svg>
<svg style="left:68.8px;top:559.9px" width="9" height="15" viewBox="0 0 9 15"><path d="M2 1.800l5.200 5.700-5.200 5.700" fill="none" stroke="#555" stroke-width="2.500"/></svg>
<div class="t" style="left:114.5px;top:560.1px;font-size:14px;color:#999">Fastened 1</div>
<svg style="left:95px;top:587.3px" width="13.200" height="16.500" viewBox="0 0 15 17" preserveAspectRatio="none"><path d="M.7 3.500v10a6.800 2.700 0 0 0 13.600 0v-10" fill="#fff" stroke="#bbb" stroke-width="1"/><path d="M.7 8.500a6.800 2.700 0 0 0 4 2.400V13.500h5.600V10.900a6.800 2.700 0 0 0 4-2.400v5a6.800 2.700 0 0 1-13.600 0z" fill="#ccc" stroke="#bbb" stroke-width=".8"/><ellipse cx="7.500" cy="3.500" rx="6.800" ry="2.800" fill="#fff" stroke="#bbb" stroke-width="1"/></svg>
<svg style="left:68.8px;top:588.3px" width="9" height="15" viewBox="0 0 9 15"><path d="M2 1.800l5.200 5.700-5.200 5.700" fill="none" stroke="#555" stroke-width="2.500"/></svg>
<div class="t" style="left:114.5px;top:588.5px;font-size:14px;color:#999">Fastened 3</div>
<svg style="left:95px;top:615.6px" width="13.200" height="16.500" viewBox="0 0 15 17" preserveAspectRatio="none"><path d="M.7 3.500v10a6.800 2.700 0 0 0 13.600 0v-10" fill="#fff" stroke="#bbb" stroke-width="1"/><path d="M.7 8.500a6.800 2.700 0 0 0 4 2.400V13.500h5.600V10.900a6.800 2.700 0 0 0 4-2.400v5a6.800 2.700 0 0 1-13.600 0z" fill="#ccc" stroke="#bbb" stroke-width=".8"/><ellipse cx="7.500" cy="3.500" rx="6.800" ry="2.800" fill="#fff" stroke="#bbb" stroke-width="1"/></svg>
<svg style="left:68.8px;top:616.6px" width="9" height="15" viewBox="0 0 9 15"><path d="M2 1.800l5.200 5.700-5.200 5.700" fill="none" stroke="#555" stroke-width="2.500"/></svg>
<div class="t" style="left:114.5px;top:616.8px;font-size:14px;color:#999">Fastened 7</div>
<svg style="left:95px;top:644.0px" width="13.200" height="16.500" viewBox="0 0 15 17" preserveAspectRatio="none"><path d="M.7 3.500v10a6.800 2.700 0 0 0 13.600 0v-10" fill="#fff" stroke="#bbb" stroke-width="1"/><path d="M.7 8.500a6.800 2.700 0 0 0 4 2.400V13.500h5.600V10.900a6.800 2.700 0 0 0 4-2.400v5a6.800 2.700 0 0 1-13.600 0z" fill="#ccc" stroke="#bbb" stroke-width=".8"/><ellipse cx="7.500" cy="3.500" rx="6.800" ry="2.800" fill="#fff" stroke="#bbb" stroke-width="1"/></svg>
<svg style="left:68.8px;top:645.0px" width="9" height="15" viewBox="0 0 9 15"><path d="M2 1.800l5.200 5.700-5.200 5.700" fill="none" stroke="#555" stroke-width="2.500"/></svg>
<div class="t" style="left:114.5px;top:645.2px;font-size:14px;color:#999">Fastened 14</div>
<svg style="left:95px;top:672.4px" width="13.200" height="16.500" viewBox="0 0 15 17" preserveAspectRatio="none"><path d="M.7 3.500v10a6.800 2.700 0 0 0 13.600 0v-10" fill="#fff" stroke="#bbb" stroke-width="1"/><path d="M.7 8.500a6.800 2.700 0 0 0 4 2.400V13.500h5.600V10.900a6.800 2.700 0 0 0 4-2.400v5a6.800 2.700 0 0 1-13.600 0z" fill="#ccc" stroke="#bbb" stroke-width=".8"/><ellipse cx="7.500" cy="3.500" rx="6.800" ry="2.800" fill="#fff" stroke="#bbb" stroke-width="1"/></svg>
<svg style="left:68.8px;top:673.4px" width="9" height="15" viewBox="0 0 9 15"><path d="M2 1.800l5.200 5.700-5.200 5.700" fill="none" stroke="#555" stroke-width="2.500"/></svg>
<div class="t" style="left:114.5px;top:673.6px;font-size:14px;color:#999">Fastened 15</div>
<svg style="left:95px;top:700.7px" width="13.200" height="16.500" viewBox="0 0 15 17" preserveAspectRatio="none"><path d="M.7 3.500v10a6.800 2.700 0 0 0 13.600 0v-10" fill="#fff" stroke="#bbb" stroke-width="1"/><path d="M.7 8.500a6.800 2.700 0 0 0 4 2.400V13.500h5.600V10.900a6.800 2.700 0 0 0 4-2.400v5a6.800 2.700 0 0 1-13.600 0z" fill="#ccc" stroke="#bbb" stroke-width=".8"/><ellipse cx="7.500" cy="3.500" rx="6.800" ry="2.800" fill="#fff" stroke="#bbb" stroke-width="1"/></svg>
<svg style="left:68.8px;top:701.7px" width="9" height="15" viewBox="0 0 9 15"><path d="M2 1.800l5.200 5.700-5.200 5.700" fill="none" stroke="#555" stroke-width="2.500"/></svg>
<div class="t" style="left:114.5px;top:701.9px;font-size:14px;color:#999">Fastened 18</div>
<svg style="left:95px;top:729.1px" width="13.200" height="16.500" viewBox="0 0 15 17" preserveAspectRatio="none"><path d="M.7 3.500v10a6.800 2.700 0 0 0 13.600 0v-10" fill="#fff" stroke="#bbb" stroke-width="1"/><path d="M.7 8.500a6.800 2.700 0 0 0 4 2.400V13.500h5.600V10.900a6.800 2.700 0 0 0 4-2.400v5a6.800 2.700 0 0 1-13.600 0z" fill="#ccc" stroke="#bbb" stroke-width=".8"/><ellipse cx="7.500" cy="3.500" rx="6.800" ry="2.800" fill="#fff" stroke="#bbb" stroke-width="1"/></svg>
<svg style="left:68.8px;top:730.1px" width="9" height="15" viewBox="0 0 9 15"><path d="M2 1.800l5.200 5.700-5.200 5.700" fill="none" stroke="#555" stroke-width="2.500"/></svg>
<div class="t" style="left:114.5px;top:730.3px;font-size:14px;color:#999">Fastened 23</div>
<svg style="left:95px;top:757.4px" width="13.200" height="16.500" viewBox="0 0 15 17" preserveAspectRatio="none"><path d="M.7 3.500v10a6.800 2.700 0 0 0 13.600 0v-10" fill="#fff" stroke="#bbb" stroke-width="1"/><path d="M.7 8.500a6.800 2.700 0 0 0 4 2.400V13.500h5.600V10.900a6.800 2.700 0 0 0 4-2.400v5a6.800 2.700 0 0 1-13.600 0z" fill="#ccc" stroke="#bbb" stroke-width=".8"/><ellipse cx="7.500" cy="3.500" rx="6.800" ry="2.800" fill="#fff" stroke="#bbb" stroke-width="1"/></svg>
<svg style="left:68.8px;top:758.4px" width="9" height="15" viewBox="0 0 9 15"><path d="M2 1.800l5.200 5.700-5.200 5.700" fill="none" stroke="#555" stroke-width="2.500"/></svg>
<div class="t" style="left:114.5px;top:758.6px;font-size:14px;color:#999">Fastened 24</div>
<svg style="left:95px;top:785.8px" width="13.200" height="16.500" viewBox="0 0 15 17" preserveAspectRatio="none"><path d="M.7 3.500v10a6.800 2.700 0 0 0 13.600 0v-10" fill="#fff" stroke="#bbb" stroke-width="1"/><path d="M.7 8.500a6.800 2.700 0 0 0 4 2.400V13.500h5.600V10.900a6.800 2.700 0 0 0 4-2.400v5a6.800 2.700 0 0 1-13.600 0z" fill="#ccc" stroke="#bbb" stroke-width=".8"/><ellipse cx="7.500" cy="3.500" rx="6.800" ry="2.800" fill="#fff" stroke="#bbb" stroke-width="1"/></svg>
<svg style="left:68.8px;top:786.8px" width="9" height="15" viewBox="0 0 9 15"><path d="M2 1.800l5.200 5.700-5.200 5.700" fill="none" stroke="#555" stroke-width="2.500"/></svg>
<div class="t" style="left:114.5px;top:787.0px;font-size:14px;color:#999">Fastened 24 (1)</div>
<svg style="left:95px;top:814.1px" width="13.200" height="16.500" viewBox="0 0 15 17" preserveAspectRatio="none"><path d="M.7 3.500v10a6.800 2.700 0 0 0 13.600 0v-10" fill="#fff" stroke="#bbb" stroke-width="1"/><path d="M.7 8.500a6.800 2.700 0 0 0 4 2.400V13.500h5.600V10.900a6.800 2.700 0 0 0 4-2.400v5a6.800 2.700 0 0 1-13.600 0z" fill="#ccc" stroke="#bbb" stroke-width=".8"/><ellipse cx="7.500" cy="3.500" rx="6.800" ry="2.800" fill="#fff" stroke="#bbb" stroke-width="1"/></svg>
<svg style="left:68.8px;top:815.1px" width="9" height="15" viewBox="0 0 9 15"><path d="M2 1.800l5.200 5.700-5.200 5.700" fill="none" stroke="#555" stroke-width="2.500"/></svg>
<div class="t" style="left:114.5px;top:815.3px;font-size:14px;color:#999">Fastened 26</div>
<svg style="left:95px;top:842.5px" width="13.200" height="16.500" viewBox="0 0 15 17" preserveAspectRatio="none"><path d="M.7 3.500v10a6.800 2.700 0 0 0 13.600 0v-10" fill="#fff" stroke="#bbb" stroke-width="1"/><path d="M.7 8.500a6.800 2.700 0 0 0 4 2.400V13.500h5.600V10.900a6.800 2.700 0 0 0 4-2.400v5a6.800 2.700 0 0 1-13.600 0z" fill="#ccc" stroke="#bbb" stroke-width=".8"/><ellipse cx="7.500" cy="3.500" rx="6.800" ry="2.800" fill="#fff" stroke="#bbb" stroke-width="1"/></svg>
<svg style="left:68.8px;top:843.5px" width="9" height="15" viewBox="0 0 9 15"><path d="M2 1.800l5.200 5.700-5.200 5.700" fill="none" stroke="#555" stroke-width="2.500"/></svg>
<div class="t" style="left:114.5px;top:843.7px;font-size:14px;color:#999">Fastened 27</div>
<svg style="left:95px;top:870.8px" width="13.200" height="16.500" viewBox="0 0 15 17" preserveAspectRatio="none"><path d="M.7 3.500v10a6.800 2.700 0 0 0 13.600 0v-10" fill="#fff" stroke="#bbb" stroke-width="1"/><path d="M.7 8.500a6.800 2.700 0 0 0 4 2.400V13.500h5.600V10.900a6.800 2.700 0 0 0 4-2.400v5a6.800 2.700 0 0 1-13.600 0z" fill="#ccc" stroke="#bbb" stroke-width=".8"/><ellipse cx="7.500" cy="3.500" rx="6.800" ry="2.800" fill="#fff" stroke="#bbb" stroke-width="1"/></svg>
<svg style="left:68.8px;top:871.8px" width="9" height="15" viewBox="0 0 9 15"><path d="M2 1.800l5.200 5.700-5.200 5.700" fill="none" stroke="#555" stroke-width="2.500"/></svg>
<div class="t" style="left:114.5px;top:872.0px;font-size:14px;color:#999">Fastened 28</div>
<svg style="left:95px;top:899.2px" width="13.200" height="16.500" viewBox="0 0 15 17" preserveAspectRatio="none"><path d="M.7 3.500v10a6.800 2.700 0 0 0 13.600 0v-10" fill="#fff" stroke="#bbb" stroke-width="1"/><path d="M.7 8.500a6.800 2.700 0 0 0 4 2.400V13.500h5.600V10.900a6.800 2.700 0 0 0 4-2.400v5a6.800 2.700 0 0 1-13.600 0z" fill="#ccc" stroke="#bbb" stroke-width=".8"/><ellipse cx="7.500" cy="3.500" rx="6.800" ry="2.800" fill="#fff" stroke="#bbb" stroke-width="1"/></svg>
<svg style="left:68.8px;top:900.2px" width="9" height="15" viewBox="0 0 9 15"><path d="M2 1.800l5.200 5.700-5.200 5.700" fill="none" stroke="#555" stroke-width="2.500"/></svg>
<div class="t" style="left:114.5px;top:900.4px;font-size:14px;color:#999">Fastened 32</div>
<svg style="left:95px;top:927.5px" width="13.200" height="16.500" viewBox="0 0 15 17" preserveAspectRatio="none"><path d="M.7 3.500v10a6.800 2.700 0 0 0 13.600 0v-10" fill="#fff" stroke="#bbb" stroke-width="1"/><path d="M.7 8.500a6.800 2.700 0 0 0 4 2.400V13.500h5.600V10.900a6.800 2.700 0 0 0 4-2.400v5a6.800 2.700 0 0 1-13.600 0z" fill="#ccc" stroke="#bbb" stroke-width=".8"/><ellipse cx="7.500" cy="3.500" rx="6.800" ry="2.800" fill="#fff" stroke="#bbb" stroke-width="1"/></svg>
<svg style="left:68.8px;top:928.5px" width="9" height="15" viewBox="0 0 9 15"><path d="M2 1.800l5.200 5.700-5.200 5.700" fill="none" stroke="#555" stroke-width="2.500"/></svg>
<div class="t" style="left:114.5px;top:928.7px;font-size:14px;color:#999">Fastened 9</div>
<svg style="left:95px;top:955.9px" width="13.200" height="16.500" viewBox="0 0 15 17" preserveAspectRatio="none"><path d="M.7 3.500v10a6.800 2.700 0 0 0 13.600 0v-10" fill="#fff" stroke="#bbb" stroke-width="1"/><path d="M.7 8.500a6.800 2.700 0 0 0 4 2.400V13.500h5.600V10.900a6.800 2.700 0 0 0 4-2.400v5a6.800 2.700 0 0 1-13.600 0z" fill="#ccc" stroke="#bbb" stroke-width=".8"/><ellipse cx="7.500" cy="3.500" rx="6.800" ry="2.800" fill="#fff" stroke="#bbb" stroke-width="1"/></svg>
<svg style="left:68.8px;top:956.9px" width="9" height="15" viewBox="0 0 9 15"><path d="M2 1.800l5.200 5.700-5.200 5.700" fill="none" stroke="#555" stroke-width="2.500"/></svg>
<div class="t" style="left:114.5px;top:957.1px;font-size:14px;color:#999">Fastened 11</div>
<svg style="left:95px;top:984.2px" width="13.200" height="16.500" viewBox="0 0 15 17" preserveAspectRatio="none"><path d="M.7 3.500v10a6.800 2.700 0 0 0 13.600 0v-10" fill="#fff" stroke="#bbb" stroke-width="1"/><path d="M.7 8.500a6.800 2.700 0 0 0 4 2.400V13.500h5.600V10.900a6.800 2.700 0 0 0 4-2.400v5a6.800 2.700 0 0 1-13.600 0z" fill="#ccc" stroke="#bbb" stroke-width=".8"/><ellipse cx="7.500" cy="3.500" rx="6.800" ry="2.800" fill="#fff" stroke="#bbb" stroke-width="1"/></svg>
<svg style="left:68.8px;top:985.2px" width="9" height="15" viewBox="0 0 9 15"><path d="M2 1.800l5.200 5.700-5.200 5.700" fill="none" stroke="#555" stroke-width="2.500"/></svg>
<div class="t" style="left:114.5px;top:985.4px;font-size:14px;color:#999">Fastened 12</div>
<svg style="left:95px;top:1012.6px" width="13.200" height="16.500" viewBox="0 0 15 17" preserveAspectRatio="none"><path d="M.7 3.500v10a6.800 2.700 0 0 0 13.600 0v-10" fill="#fff" stroke="#bbb" stroke-width="1"/><path d="M.7 8.500a6.800 2.700 0 0 0 4 2.400V13.500h5.600V10.900a6.800 2.700 0 0 0 4-2.400v5a6.800 2.700 0 0 1-13.600 0z" fill="#ccc" stroke="#bbb" stroke-width=".8"/><ellipse cx="7.500" cy="3.500" rx="6.800" ry="2.800" fill="#fff" stroke="#bbb" stroke-width="1"/></svg>
<svg style="left:68.8px;top:1013.6px" width="9" height="15" viewBox="0 0 9 15"><path d="M2 1.800l5.200 5.700-5.200 5.700" fill="none" stroke="#555" stroke-width="2.500"/></svg>
<div class="t" style="left:114.5px;top:1013.8px;font-size:14px;color:#999">Fastened 33</div>
<svg style="left:95px;top:1040.9px" width="13.200" height="16.500" viewBox="0 0 15 17" preserveAspectRatio="none"><path d="M.7 3.500v10a6.800 2.700 0 0 0 13.600 0v-10" fill="#fff" stroke="#bbb" stroke-width="1"/><path d="M.7 8.500a6.800 2.700 0 0 0 4 2.400V13.500h5.600V10.900a6.800 2.700 0 0 0 4-2.400v5a6.800 2.700 0 0 1-13.600 0z" fill="#ccc" stroke="#bbb" stroke-width=".8"/><ellipse cx="7.500" cy="3.500" rx="6.800" ry="2.800" fill="#fff" stroke="#bbb" stroke-width="1"/></svg>
<svg style="left:68.8px;top:1041.9px" width="9" height="15" viewBox="0 0 9 15"><path d="M2 1.800l5.200 5.700-5.200 5.700" fill="none" stroke="#555" stroke-width="2.500"/></svg>
<div class="t" style="left:114.5px;top:1042.1px;font-size:14px;color:#999">Fastened 19</div>
<svg style="left:95px;top:1069.3px" width="13.200" height="16.500" viewBox="0 0 15 17" preserveAspectRatio="none"><path d="M.7 3.500v10a6.800 2.700 0 0 0 13.600 0v-10" fill="#fff" stroke="#bbb" stroke-width="1"/><path d="M.7 8.500a6.800 2.700 0 0 0 4 2.400V13.500h5.600V10.900a6.800 2.700 0 0 0 4-2.400v5a6.800 2.700 0 0 1-13.600 0z" fill="#ccc" stroke="#bbb" stroke-width=".8"/><ellipse cx="7.500" cy="3.500" rx="6.800" ry="2.800" fill="#fff" stroke="#bbb" stroke-width="1"/></svg>
<svg style="left:68.8px;top:1070.3px" width="9" height="15" viewBox="0 0 9 15"><path d="M2 1.800l5.200 5.700-5.200 5.700" fill="none" stroke="#555" stroke-width="2.500"/></svg>
<div class="t" style="left:114.5px;top:1070.5px;font-size:14px;color:#999">Fastened 21</div>
<svg style="left:95px;top:1097.6px" width="13.200" height="16.500" viewBox="0 0 15 17" preserveAspectRatio="none"><path d="M.7 3.500v10a6.800 2.700 0 0 0 13.600 0v-10" fill="#fff" stroke="#bbb" stroke-width="1"/><path d="M.7 8.500a6.800 2.700 0 0 0 4 2.400V13.500h5.600V10.900a6.800 2.700 0 0 0 4-2.400v5a6.800 2.700 0 0 1-13.600 0z" fill="#ccc" stroke="#bbb" stroke-width=".8"/><ellipse cx="7.500" cy="3.500" rx="6.800" ry="2.800" fill="#fff" stroke="#bbb" stroke-width="1"/></svg>
<svg style="left:68.8px;top:1098.6px" width="9" height="15" viewBox="0 0 9 15"><path d="M2 1.800l5.200 5.700-5.200 5.700" fill="none" stroke="#555" stroke-width="2.500"/></svg>
<div class="t" style="left:114.5px;top:1098.8px;font-size:14px;color:#999">Fastened 10</div>
<svg style="left:95px;top:1126.0px" width="13.200" height="16.500" viewBox="0 0 15 17" preserveAspectRatio="none"><path d="M.7 3.500v10a6.800 2.700 0 0 0 13.600 0v-10" fill="#fff" stroke="#bbb" stroke-width="1"/><path d="M.7 8.500a6.800 2.700 0 0 0 4 2.400V13.500h5.600V10.900a6.800 2.700 0 0 0 4-2.400v5a6.800 2.700 0 0 1-13.600 0z" fill="#ccc" stroke="#bbb" stroke-width=".8"/><ellipse cx="7.500" cy="3.500" rx="6.800" ry="2.800" fill="#fff" stroke="#bbb" stroke-width="1"/></svg>
<svg style="left:68.8px;top:1127.0px" width="9" height="15" viewBox="0 0 9 15"><path d="M2 1.800l5.200 5.700-5.200 5.700" fill="none" stroke="#555" stroke-width="2.500"/></svg>
<div class="t" style="left:114.5px;top:1127.2px;font-size:14px;color:#999">Fastened 13</div>
<svg style="left:95px;top:1154.4px" width="13.200" height="16.500" viewBox="0 0 15 17" preserveAspectRatio="none"><path d="M.7 3.500v10a6.800 2.700 0 0 0 13.600 0v-10" fill="#fff" stroke="#bbb" stroke-width="1"/><path d="M.7 8.500a6.800 2.700 0 0 0 4 2.400V13.500h5.600V10.900a6.800 2.700 0 0 0 4-2.400v5a6.800 2.700 0 0 1-13.600 0z" fill="#ccc" stroke="#bbb" stroke-width=".8"/><ellipse cx="7.500" cy="3.500" rx="6.800" ry="2.800" fill="#fff" stroke="#bbb" stroke-width="1"/></svg>
<svg style="left:68.8px;top:1155.4px" width="9" height="15" viewBox="0 0 9 15"><path d="M2 1.800l5.200 5.700-5.200 5.700" fill="none" stroke="#555" stroke-width="2.500"/></svg>
<div class="t" style="left:114.5px;top:1155.6px;font-size:14px;color:#999">Fastened 25</div>
</div>
</div><!--/PANEL-->
<!--CANVAS--><div id="canvas">
<svg style="left:0;top:0" width="1651" height="1083" viewBox="268 84 1651 1083">
<defs>
<linearGradient id="gband" gradientUnits="userSpaceOnUse" x1="1120" y1="225" x2="880" y2="390"><stop offset="0" stop-color="#2f8a37"/><stop offset="1" stop-color="#226a2a"/></linearGradient>
<linearGradient id="gband2" gradientUnits="userSpaceOnUse" x1="1110" y1="240" x2="890" y2="385"><stop offset="0" stop-color="#3aa242"/><stop offset=".6" stop-color="#2f8c38"/><stop offset="1" stop-color="#246f2c"/></linearGradient>
<linearGradient id="lrg" gradientUnits="userSpaceOnUse" x1="858" y1="0" x2="1062" y2="0"><stop offset="0" stop-color="#222"/><stop offset=".25" stop-color="#fff"/><stop offset=".6" stop-color="#999"/><stop offset="1" stop-color="#222"/></linearGradient>
<mask id="lrmask" maskUnits="userSpaceOnUse" x="700" y="200" width="500" height="400"><rect x="700" y="200" width="500" height="400" fill="url(#lrg)"/></mask>
<filter id="blur8" x="-20%" y="-20%" width="140%" height="140%"><feGaussianBlur stdDeviation="5"/></filter>
<linearGradient id="gtint" gradientUnits="userSpaceOnUse" x1="900" y1="400" x2="1060" y2="560"><stop offset="0" stop-color="#2fa03a" stop-opacity="0"/><stop offset=".35" stop-color="#2fa03a" stop-opacity=".085"/><stop offset=".7" stop-color="#2fa03a" stop-opacity=".04"/><stop offset="1" stop-color="#2fa03a" stop-opacity="0"/></linearGradient>
<linearGradient id="gtint2" gradientUnits="userSpaceOnUse" x1="1150" y1="720" x2="1300" y2="800"><stop offset="0" stop-color="#2fa03a" stop-opacity="0"/><stop offset=".5" stop-color="#2fa03a" stop-opacity=".14"/><stop offset="1" stop-color="#2fa03a" stop-opacity=".03"/></linearGradient>
<radialGradient id="ball" cx=".75" cy=".3" r=".7"><stop offset="0" stop-color="#fbcf55"/><stop offset=".6" stop-color="#f0b93a"/><stop offset="1" stop-color="#c9962a"/></radialGradient>
<linearGradient id="shaft" x1="0" y1="0" x2="1" y2="1"><stop offset="0" stop-color="#f2f2f2"/><stop offset=".5" stop-color="#c4c4c4"/><stop offset="1" stop-color="#777"/></linearGradient>
<radialGradient id="lbolt" cx=".6" cy=".3" r=".8"><stop offset="0" stop-color="#aab2b7"/><stop offset=".6" stop-color="#8a9297"/><stop offset="1" stop-color="#5e6569"/></radialGradient>
<radialGradient id="bolt" cx=".4" cy=".35" r=".7"><stop offset="0" stop-color="#c9ced1"/><stop offset=".7" stop-color="#8e9498"/><stop offset="1" stop-color="#555"/></radialGradient>
<clipPath id="sil"><path id="silp" d="M1145 214.500L1153 220Q1157 224 1157 230L1272 345Q1291 357 1306 381L1408 486Q1437 515 1437.500 548V725Q1439 733 1432 741L1352 812Q1345 822 1338 820.500L845 680.500Q838 678 833 668L822.500 632.500 785 555 764 500Q762 480 772 465L815 430 850 397.500 865 390 895 362.500 915 345 965 310 1015 275 1065 240 1100 225Q1125 216 1145 214.500Z"/></clipPath>
<clipPath id="frontplate"><path d="M862 400Q872 397 880 393L896.700 380 930 353 963 328Q980 316 996.700 306.700Q1015 297 1030 293Q1045 290 1060 289L1344 572Q1353 582 1353.750 596V830H760V460Z"/></clipPath>
<clipPath id="rightofplate"><path d="M1063 288L1160 220 1450 500V840H1353.750V596Q1353 582 1344 572Z"/></clipPath>
</defs>
<use href="#silp" fill="#2b2d2c" stroke="#141414" stroke-width="1.600"/>
<g clip-path="url(#sil)">
<path d="M1128 222L1100 226 1065 241 1015 276 965 311 915 346 895 363.500 866 390 862 400Q872 397 880 393L896.700 380 930 353 963 328Q980 316 996.700 306.700Q1015 297 1030 293Q1045 290 1060 289L1128 226Z" fill="url(#gband)"/>
<path d="M1123 228L986.700 306.700 905 367 880 393 896.700 380 930 353 963 328Q980 316 996.700 306.700Q1015 297 1030 293Q1045 290 1060 289Z" fill="url(#gband2)"/>
<path d="M1123 228L986.700 306.700 905 367" fill="none" stroke="#12411a" stroke-width="1.100"/>
<path d="M1135 216.500L1100 226 1065 241 1015 276 965 311 915 346 895 363.500 880 377" fill="none" stroke="#161a16" stroke-width="3"/>
<g mask="url(#lrmask)">
<polygon points="858.0,404.0 862.0,400.0 880.0,391.0 896.7,378.0 930.0,351.0 963.0,326.0 996.7,304.7 1030.0,291.5 1060.0,288.0 1061.5,290.2 1031.5,293.7 998.2,306.9 964.5,328.2 931.5,353.2 898.2,380.2 881.5,393.2 863.5,402.2 859.5,406.2" fill="#2a7d33" opacity="0.950"/>
<polygon points="859.3,405.9 863.3,401.9 881.3,392.9 898.0,379.9 931.3,352.9 964.3,327.9 998.0,306.6 1031.3,293.4 1061.3,289.9 1062.8,292.1 1032.8,295.6 999.5,308.8 965.8,330.1 932.8,355.1 899.5,382.1 882.8,395.1 864.8,404.1 860.8,408.1" fill="#2a7d33" opacity="0.844"/>
<polygon points="860.6,407.8 864.6,403.8 882.6,394.8 899.3,381.8 932.6,354.8 965.6,329.8 999.3,308.5 1032.6,295.3 1062.6,291.8 1064.1,294.0 1034.1,297.5 1000.8,310.7 967.1,332.0 934.1,357.0 900.8,384.0 884.1,397.0 866.1,406.0 862.1,410.0" fill="#2a7d33" opacity="0.742"/>
<polygon points="861.9,409.7 865.9,405.7 883.9,396.7 900.6,383.7 933.9,356.7 966.9,331.7 1000.6,310.4 1033.9,297.2 1063.9,293.7 1065.4,295.9 1035.4,299.4 1002.1,312.6 968.4,333.9 935.4,358.9 902.1,385.9 885.4,398.9 867.4,407.9 863.4,411.9" fill="#2a7d33" opacity="0.646"/>
<polygon points="863.2,411.6 867.2,407.6 885.2,398.6 901.9,385.6 935.2,358.6 968.2,333.6 1001.9,312.3 1035.2,299.1 1065.2,295.6 1066.7,297.8 1036.7,301.3 1003.4,314.5 969.7,335.8 936.7,360.8 903.4,387.8 886.7,400.8 868.7,409.8 864.7,413.8" fill="#2a7d33" opacity="0.555"/>
<polygon points="864.5,413.5 868.5,409.5 886.5,400.5 903.2,387.5 936.5,360.5 969.5,335.5 1003.2,314.2 1036.5,301.0 1066.5,297.5 1068.1,299.7 1038.1,303.2 1004.8,316.4 971.1,337.7 938.1,362.7 904.8,389.7 888.1,402.7 870.1,411.7 866.1,415.7" fill="#2a7d33" opacity="0.468"/>
<polygon points="865.8,415.4 869.8,411.4 887.8,402.4 904.5,389.4 937.8,362.4 970.8,337.4 1004.5,316.1 1037.8,302.9 1067.8,299.4 1069.4,301.6 1039.4,305.1 1006.1,318.3 972.4,339.6 939.4,364.6 906.1,391.6 889.4,404.6 871.4,413.6 867.4,417.6" fill="#2a7d33" opacity="0.388"/>
<polygon points="867.1,417.3 871.1,413.3 889.1,404.3 905.8,391.3 939.1,364.3 972.1,339.3 1005.8,318.0 1039.1,304.8 1069.1,301.3 1070.7,303.5 1040.7,307.0 1007.4,320.2 973.7,341.5 940.7,366.5 907.4,393.5 890.7,406.5 872.7,415.5 868.7,419.5" fill="#2a7d33" opacity="0.313"/>
<polygon points="868.4,419.2 872.4,415.2 890.4,406.2 907.1,393.2 940.4,366.2 973.4,341.2 1007.1,319.9 1040.4,306.7 1070.4,303.2 1072.0,305.4 1042.0,308.9 1008.7,322.1 975.0,343.4 942.0,368.4 908.7,395.4 892.0,408.4 874.0,417.4 870.0,421.4" fill="#2a7d33" opacity="0.245"/>
<polygon points="869.7,421.1 873.7,417.1 891.7,408.1 908.4,395.1 941.7,368.1 974.7,343.1 1008.4,321.8 1041.7,308.6 1071.7,305.1 1073.3,307.3 1043.3,310.8 1010.0,324.0 976.3,345.3 943.3,370.3 910.0,397.3 893.3,410.3 875.3,419.3 871.3,423.3" fill="#2a7d33" opacity="0.183"/>
<polygon points="871.0,423.0 875.0,419.0 893.0,410.0 909.7,397.0 943.0,370.0 976.0,345.0 1009.7,323.7 1043.0,310.5 1073.0,307.0 1074.6,309.2 1044.6,312.7 1011.3,325.9 977.6,347.2 944.6,372.2 911.3,399.2 894.6,412.2 876.6,421.2 872.6,425.2" fill="#2a7d33" opacity="0.128"/>
<polygon points="872.3,424.8 876.3,420.8 894.3,411.8 911.0,398.8 944.3,371.8 977.3,346.8 1011.0,325.5 1044.3,312.3 1074.3,308.8 1075.9,311.1 1045.9,314.6 1012.6,327.8 978.9,349.1 945.9,374.1 912.6,401.1 895.9,414.1 877.9,423.1 873.9,427.1" fill="#2a7d33" opacity="0.081"/>
<polygon points="873.6,426.7 877.6,422.7 895.6,413.7 912.3,400.7 945.6,373.7 978.6,348.7 1012.3,327.4 1045.6,314.2 1075.6,310.7 1077.2,313.0 1047.2,316.5 1013.9,329.7 980.2,351.0 947.2,376.0 913.9,403.0 897.2,416.0 879.2,425.0 875.2,429.0" fill="#2a7d33" opacity="0.042"/>
<polygon points="875.0,428.6 879.0,424.6 897.0,415.6 913.7,402.6 947.0,375.6 980.0,350.6 1013.7,329.3 1047.0,316.1 1077.0,312.6 1078.5,314.9 1048.5,318.4 1015.2,331.6 981.5,352.9 948.5,377.9 915.2,404.9 898.5,417.9 880.5,426.9 876.5,430.9" fill="#2a7d33" opacity="0.014"/>
</g>
<path d="M772 465L1055 292 1300 520 1300 800 845 680Z" fill="url(#gtint)"/>
<path d="M1100 690L1347 760V815L1100 745Z" fill="url(#gtint2)"/>
<path d="M1128 224L1146 230Q1149 233 1146.700 238L1080 302 1059 290.500Z" fill="#3dad46" stroke="#155a1a" stroke-width="1"/>
<path d="M1138 229L1072 295" stroke="#4cba54" stroke-width="6" opacity=".55"/>
<ellipse cx="1149" cy="224" rx="5" ry="7" transform="rotate(-40 1149 224)" fill="#262827" stroke="#0e0e0e" stroke-width="1.200"/>
<path d="M1082 303L1148 236 1157 230 1408 486Q1437 515 1437.500 548V740L1353.750 812V596Q1353 582 1344 572Z" fill="#2e302f"/>
<ellipse cx="1150" cy="485" rx="150" ry="190" transform="rotate(-38 1150 485)" fill="none" stroke="#131413" stroke-width="1.300" opacity="0.75"/>
<ellipse cx="1150" cy="485" rx="128" ry="165" transform="rotate(-38 1150 485)" fill="none" stroke="#131413" stroke-width="1.300" opacity="0.7"/>
<ellipse cx="1150" cy="485" rx="96" ry="124" transform="rotate(-38 1150 485)" fill="none" stroke="#131413" stroke-width="1.300" opacity="0.75"/>
<ellipse cx="1150" cy="485" rx="80" ry="104" transform="rotate(-38 1150 485)" fill="none" stroke="#131413" stroke-width="1.300" opacity="0.75"/>
<ellipse cx="1150" cy="485" rx="62" ry="82" transform="rotate(-38 1150 485)" fill="none" stroke="#131413" stroke-width="1.300" opacity="0.8"/>
<ellipse cx="1148" cy="490" rx="58" ry="76" transform="rotate(-38 1148 490)" fill="#292b2a" stroke="#151515" stroke-width="1.200"/>
<ellipse cx="1150" cy="490" rx="44" ry="58" transform="rotate(-38 1150 490)" fill="none" stroke="#151515" stroke-width="1.100"/>
<ellipse cx="1150" cy="490" rx="50" ry="66" transform="rotate(-38 1150 490)" fill="none" stroke="#151515" stroke-width="1.100"/>
<g transform="translate(1131 446) rotate(-113)"><rect x="-4" y="-12" width="9" height="24" rx="3" fill="#2f3130" stroke="#101010" stroke-width="1.100"/><rect x="3" y="-3" width="13" height="6" fill="#2f3130" stroke="#101010" stroke-width="1"/><circle r="4.800" fill="#2b2d2c" stroke="#101010" stroke-width="1.100"/><circle r="2" fill="none" stroke="#101010" stroke-width=".9"/></g>
<g transform="translate(1177 460) rotate(-48)"><rect x="-4" y="-12" width="9" height="24" rx="3" fill="#2f3130" stroke="#101010" stroke-width="1.100"/><rect x="3" y="-3" width="13" height="6" fill="#2f3130" stroke="#101010" stroke-width="1"/><circle r="4.800" fill="#2b2d2c" stroke="#101010" stroke-width="1.100"/><circle r="2" fill="none" stroke="#101010" stroke-width=".9"/></g>
<g transform="translate(1198 505) rotate(17)"><rect x="-4" y="-12" width="9" height="24" rx="3" fill="#2f3130" stroke="#101010" stroke-width="1.100"/><rect x="3" y="-3" width="13" height="6" fill="#2f3130" stroke="#101010" stroke-width="1"/><circle r="4.800" fill="#2b2d2c" stroke="#101010" stroke-width="1.100"/><circle r="2" fill="none" stroke="#101010" stroke-width=".9"/></g>
<g transform="translate(1175 537) rotate(62)"><rect x="-4" y="-12" width="9" height="24" rx="3" fill="#2f3130" stroke="#101010" stroke-width="1.100"/><rect x="3" y="-3" width="13" height="6" fill="#2f3130" stroke="#101010" stroke-width="1"/><circle r="4.800" fill="#2b2d2c" stroke="#101010" stroke-width="1.100"/><circle r="2" fill="none" stroke="#101010" stroke-width=".9"/></g>
<g transform="translate(1109 479) rotate(-165)"><rect x="-4" y="-12" width="9" height="24" rx="3" fill="#2f3130" stroke="#101010" stroke-width="1.100"/><rect x="3" y="-3" width="13" height="6" fill="#2f3130" stroke="#101010" stroke-width="1"/><circle r="4.800" fill="#2b2d2c" stroke="#101010" stroke-width="1.100"/><circle r="2" fill="none" stroke="#101010" stroke-width=".9"/></g>
<g transform="translate(1140 545) rotate(100)"><rect x="-4" y="-12" width="9" height="24" rx="3" fill="#2f3130" stroke="#101010" stroke-width="1.100"/><rect x="3" y="-3" width="13" height="6" fill="#2f3130" stroke="#101010" stroke-width="1"/><circle r="4.800" fill="#2b2d2c" stroke="#101010" stroke-width="1.100"/><circle r="2" fill="none" stroke="#101010" stroke-width=".9"/></g>
<circle cx="837" cy="514" r="45" fill="none" stroke="#161716" stroke-width="1.100" opacity=".75"/><path d="M826 640A54 54 0 0 1 932 660" fill="none" stroke="#161716" stroke-width="1.100" opacity=".75"/>
<path d="M1000 300Q940 420 1010 560Q1080 690 1240 720" fill="none" stroke="#171817" stroke-width="1" opacity=".7"/>
<path d="M1030 320Q1000 430 1040 530" fill="none" stroke="#171817" stroke-width="1" opacity=".6"/>
<path d="M940 340Q910 440 950 560Q1000 690 1130 740" fill="none" stroke="#171817" stroke-width="1" opacity=".6"/>
<path d="M850 400L880 480M1257 690Q1300 760 1345 765" fill="none" stroke="#171817" stroke-width="1" opacity=".6"/>
<g clip-path="url(#rightofplate)">
<path d="M1128 366C1160 350 1203 356 1234 381C1268 408 1292 452 1290 516L1200 480Z" fill="#56b44b" stroke="#163d16" stroke-width="1"/>
<path d="M1132 378C1159 363 1194 366 1223 387C1256 412 1279 453 1278 517" fill="none" stroke="#174a19" stroke-width="1.200"/>
<path d="M1136 391C1158 376 1184 377 1212 394C1243 417 1266 454 1265 518" fill="none" stroke="#174a19" stroke-width="1.200"/>
<path d="M1140 406C1156 392 1173 390 1198 401C1228 422 1250 456 1250 520" fill="none" stroke="#174a19" stroke-width="1.200"/>
<path d="M1170 400C1200 410 1235 450 1250 490L1200 470Z" fill="#3f9a3c" opacity=".7"/>
<path d="M1175 340C1240 330 1310 400 1320 500" fill="none" stroke="#161716" stroke-width="1" opacity=".7"/>
<path d="M1200 330C1270 330 1340 410 1335 510" fill="none" stroke="#161716" stroke-width="1" opacity=".6"/>
<path d="M1150 352C1215 322 1300 380 1305 505" fill="none" stroke="#161716" stroke-width="1" opacity=".7"/>
</g>
<path d="M1063 293L1344 572Q1353 582 1353.750 596V812" fill="none" stroke="#151515" stroke-width="1.200"/>
<path d="M1069 300L1082 303 1349 570" fill="none" stroke="#1b1c1b" stroke-width="1" opacity=".9"/>
<path d="M1063 293L1082 303 1300 520 1288 518Z" fill="#303231" opacity=".75"/>
<ellipse cx="1382" cy="522" rx="19" ry="31" transform="rotate(-38 1382 522)" fill="#272828" stroke="#131313" stroke-width="1"/>
<ellipse cx="1382" cy="523" rx="14" ry="25" transform="rotate(-38 1382 523)" fill="#4a4d4f" stroke="#131313" stroke-width="1"/>
<ellipse cx="1378" cy="526" rx="12" ry="22" transform="rotate(-38 1378 526)" fill="#1f2020" stroke="#131313" stroke-width="1"/>
<ellipse cx="1374" cy="529" rx="10" ry="19" transform="rotate(-38 1374 529)" fill="#2a2b2b" stroke="#131313" stroke-width="1"/>
<path d="M1296.700 522.700C1305 512 1320 505.400 1333 504C1352 503 1373.500 522 1384 540C1393 556 1392.500 568 1389.500 578C1386 590 1378 598 1370.800 604L1356 614.800C1360 600 1359 586.800 1354.800 565.400C1350 552 1342.700 544 1324 530.700C1315 527 1305 526 1296.700 522.700Z" fill="#51b048" stroke="#163d16" stroke-width="1"/>
<path d="M1296.700 522.700C1305 526 1315 527 1324 530.700C1342.700 544 1350 552 1354.800 565.400C1359 586.800 1360 600 1356 614.800L1360 612C1365.500 598 1366 584 1365.400 573.500C1364 560 1358 551 1354.800 550.800C1349 541 1340 535 1336 533.400C1325 528 1312 526 1303 525Z" fill="#2f7a32"/>
<path d="M1300 524.500C1312 526 1325 528 1336 533.400C1346 538 1354 548 1358 555C1364 566 1366 580 1365.400 588C1365 598 1363 606 1360 612" fill="none" stroke="#174a19" stroke-width="1.100"/>
<path d="M1304 514.500C1314 512 1325 512.500 1333.400 514.700C1345 518 1353 523 1360 529.400C1368 538 1373 546 1376 554.800C1379 563 1381 570 1380 576C1380 584 1378 591 1374 598" fill="none" stroke="#174a19" stroke-width="1.100"/>
<clipPath id="ballclip"><path d="M1353.750 600H1440V800H1353.750Z"/></clipPath>
<g clip-path="url(#ballclip)"><circle cx="1323" cy="670" r="70" fill="url(#ball)" stroke="#7a5a10" stroke-width=".8"/></g>
<path d="M1353.750 614L1358 614C1345 590 1320 548 1297 526L1353.750 560Z" fill="#2b2d2c" opacity="0"/>
<path d="M1353.750 733C1375 722 1385 708 1388 695L1418 702 1431 712V746L1353.750 811Z" fill="#3aa843" stroke="#155a1a" stroke-width="1"/>
<path d="M1353.750 733C1375 722 1385 708 1388 695L1418 702 1353.750 757Z" fill="#43b54c"/>
<path d="M1353.750 757L1418 702M1353.750 776L1426 708M1353.750 790L1431 718M1431 712V746" fill="none" stroke="#1c6a22" stroke-width="1"/>
<path d="M1353.750 790L1431 718V746L1353.750 811Z" fill="#2f9a39"/>
<path d="M1430 548V742" stroke="#181818" stroke-width="1"/>
<path d="M1152.700 238.700L1400 487Q1430 518 1430 548" fill="none" stroke="#181818" stroke-width="1"/>
<path d="M1157 230L1408 486Q1437 515 1437.500 548V725L1430 742V548Q1430 518 1400 487L1152.700 238.700Z" fill="#292b2a" opacity=".8"/>
<path d="M1347.500 590V812" stroke="#151515" stroke-width="1"/>
<path d="M1100 700L1347 768" stroke="#171817" stroke-width="1" opacity=".8"/>
<path d="M845 672L1347 812" stroke="#191a19" stroke-width="1" opacity=".7"/>
<path d="M993 692L1216 754Q1224 758 1222 764L1216 772 993 710Z" fill="#252626" stroke="#141414" stroke-width="1"/>
<circle cx="1028.8" cy="712.0" r="3.300" fill="#3a3c3c"/><circle cx="1021.9" cy="719.4" r="3.300" fill="#383a3a"/><circle cx="1076.8" cy="725.9" r="3.300" fill="#3a3c3c"/><circle cx="1069.9" cy="733.3" r="3.300" fill="#383a3a"/><circle cx="1124.8" cy="739.8" r="3.300" fill="#3a3c3c"/><circle cx="1117.9" cy="747.2" r="3.300" fill="#383a3a"/><circle cx="1172.8" cy="753.7" r="3.300" fill="#3a3c3c"/><circle cx="1165.9" cy="761.1" r="3.300" fill="#383a3a"/>
</g>
<path d="M875 657L1270 664L1282 677L868 672Z" fill="#232222" stroke="#131313" stroke-width="1.200"/><path d="M875 657L1270 664L1275.4 669.9L871.9 663.8Z" fill="#2e2d2d"/><path d="M871.9 663.8L1275.4 669.9" stroke="#151515" stroke-width=".8"/>
<path d="M846 610.5L1258 551.5L1240 567.7L852 620Z" fill="#232222" stroke="#131313" stroke-width="1.200"/><path d="M846 610.5L1258 551.5L1249.9 558.8L848.7 614.8Z" fill="#2e2d2d"/><path d="M848.7 614.8L1249.9 558.8" stroke="#151515" stroke-width=".8"/>
<path d="M826 549L1100 554.7L1098 571L815 562Z" fill="#232222" stroke="#131313" stroke-width="1.200"/><path d="M826 549L1100 554.7L1099.1 562.0L821.0 554.9Z" fill="#2e2d2d"/><path d="M821.0 554.9L1099.1 562.0" stroke="#151515" stroke-width=".8"/>
<path d="M797 476.2L1105 484.5L1100 498.8L797 489.7Z" fill="#232222" stroke="#131313" stroke-width="1.200"/><path d="M797 476.2L1105 484.5L1102.8 490.9L797.0 482.3Z" fill="#2e2d2d"/><path d="M797.0 482.3L1102.8 490.9" stroke="#151515" stroke-width=".8"/>
<path d="M822 488L844 494A24 32 0 0 1 844 558L822 552Z" fill="#1a1a1a" stroke="#0d0d0d" stroke-width="1"/><path d="M837.0 494.9L841.0 544.5" stroke="#5a5a5a" stroke-width="1.300" opacity=".8"/><path d="M840.7 495.9L844.7 545.5" stroke="#5a5a5a" stroke-width="1.300" opacity=".8"/><path d="M844.4 496.9L848.4 546.5" stroke="#5a5a5a" stroke-width="1.300" opacity=".8"/><path d="M848.0 497.9L852.0 547.5" stroke="#5a5a5a" stroke-width="1.300" opacity=".8"/><path d="M851.7 498.9L855.7 548.5" stroke="#5a5a5a" stroke-width="1.300" opacity=".8"/><path d="M855.4 499.9L859.4 549.5" stroke="#5a5a5a" stroke-width="1.300" opacity=".8"/>
<ellipse cx="805" cy="523.5" rx="37" ry="38.5" transform="rotate(-15 805 523.5)" fill="#1f1f1f" stroke="#101010" stroke-width="1.600"/><ellipse cx="802.4" cy="524.4" rx="37" ry="38.5" transform="rotate(-15 802.4 524.4)" fill="#1f1f1f"/><ellipse cx="802.8" cy="524.2" rx="37" ry="38.5" transform="rotate(-15 802.8 524.2)" fill="#1f1f1f"/><ellipse cx="803.1" cy="524.1" rx="37" ry="38.5" transform="rotate(-15 803.1 524.1)" fill="#1f1f1f"/><ellipse cx="803.5" cy="524.0" rx="37" ry="38.5" transform="rotate(-15 803.5 524.0)" fill="#1f1f1f"/><ellipse cx="803.9" cy="523.9" rx="37" ry="38.5" transform="rotate(-15 803.9 523.9)" fill="#1f1f1f"/><ellipse cx="804.2" cy="523.8" rx="37" ry="38.5" transform="rotate(-15 804.2 523.8)" fill="#1f1f1f"/><ellipse cx="804.6" cy="523.6" rx="37" ry="38.5" transform="rotate(-15 804.6 523.6)" fill="#1f1f1f"/><ellipse cx="802" cy="524.5" rx="37" ry="38.5" transform="rotate(-15 802 524.5)" fill="#242424" stroke="#0e0e0e" stroke-width="1.200"/><path d="M817.2 526.2 L824.9 528.2 L824.0 532.4 L816.2 531.1 L814.8 534.1 L820.5 539.8 L817.8 543.0 L811.7 537.8 L809.0 539.6 L811.2 547.6 L807.3 549.0 L804.5 541.2 L801.3 541.4 L799.5 549.5 L795.4 548.6 L796.7 540.4 L793.9 538.9 L788.4 544.9 L785.3 542.1 L790.3 535.6 L788.5 532.9 L780.9 535.2 L779.6 531.1 L787.0 528.1 L786.8 524.8 L779.1 522.8 L780.0 518.6 L787.8 519.9 L789.2 516.9 L783.5 511.2 L786.2 508.0 L792.3 513.2 L795.0 511.4 L792.8 503.4 L796.7 502.0 L799.5 509.8 L802.7 509.6 L804.5 501.5 L808.6 502.4 L807.3 510.6 L810.1 512.1 L815.6 506.1 L818.7 508.9 L813.7 515.4 L815.5 518.1 L823.1 515.8 L824.4 519.9 L817.0 522.9Z" fill="#2b2b2b" stroke="#0c0c0c" stroke-width="1.100"/><circle cx="802" cy="525.5" r="11.5" fill="#272727" stroke="#0c0c0c" stroke-width="1"/>
<path d="M783 529.500L801 517.500 808.500 528.500 790.500 541Z" fill="url(#shaft)"/><ellipse cx="787" cy="535.500" rx="5.500" ry="6.500" transform="rotate(-35 787 535.500)" fill="#e6e6e6" stroke="#777" stroke-width="1"/><circle cx="787" cy="535.500" r="2.200" fill="#999"/>
<path d="M872 615L892 621A18 25 0 0 1 892 671L872 665Z" fill="#1a1a1a" stroke="#0d0d0d" stroke-width="1"/><path d="M883.9 620.6L887.9 659.4" stroke="#5a5a5a" stroke-width="1.300" opacity=".8"/><path d="M887.9 621.8L891.9 660.5" stroke="#5a5a5a" stroke-width="1.300" opacity=".8"/><path d="M891.9 623.0L895.9 661.8" stroke="#5a5a5a" stroke-width="1.300" opacity=".8"/><path d="M895.9 624.2L899.9 663.0" stroke="#5a5a5a" stroke-width="1.300" opacity=".8"/><path d="M899.9 625.4L903.9 664.1" stroke="#5a5a5a" stroke-width="1.300" opacity=".8"/>
<ellipse cx="858" cy="643" rx="27.5" ry="31" transform="rotate(-15 858 643)" fill="#1f1f1f" stroke="#101010" stroke-width="1.600"/><ellipse cx="855.4" cy="643.9" rx="27.5" ry="31" transform="rotate(-15 855.4 643.9)" fill="#1f1f1f"/><ellipse cx="855.8" cy="643.8" rx="27.5" ry="31" transform="rotate(-15 855.8 643.8)" fill="#1f1f1f"/><ellipse cx="856.1" cy="643.6" rx="27.5" ry="31" transform="rotate(-15 856.1 643.6)" fill="#1f1f1f"/><ellipse cx="856.5" cy="643.5" rx="27.5" ry="31" transform="rotate(-15 856.5 643.5)" fill="#1f1f1f"/><ellipse cx="856.9" cy="643.4" rx="27.5" ry="31" transform="rotate(-15 856.9 643.4)" fill="#1f1f1f"/><ellipse cx="857.2" cy="643.2" rx="27.5" ry="31" transform="rotate(-15 857.2 643.2)" fill="#1f1f1f"/><ellipse cx="857.6" cy="643.1" rx="27.5" ry="31" transform="rotate(-15 857.6 643.1)" fill="#1f1f1f"/><ellipse cx="855" cy="644" rx="27.5" ry="31" transform="rotate(-15 855 644)" fill="#242424" stroke="#0e0e0e" stroke-width="1.200"/><path d="M866.2 645.3 L871.9 646.8 L871.3 650.2 L865.5 649.3 L864.3 651.7 L868.3 656.1 L866.0 658.6 L861.6 654.5 L859.4 655.9 L860.4 661.9 L857.2 662.7 L855.6 656.8 L853.1 656.6 L850.9 662.3 L847.8 661.2 L849.5 655.3 L847.4 653.7 L842.6 657.2 L840.6 654.5 L845.1 650.5 L844.1 648.0 L838.3 648.2 L838.0 644.8 L843.8 644.0 L844.3 641.4 L839.3 638.2 L840.8 635.2 L846.1 637.8 L847.9 635.9 L845.2 630.4 L848.1 628.7 L851.2 633.9 L853.7 633.3 L854.3 627.2 L857.6 627.4 L857.5 633.5 L860.0 634.4 L863.6 629.6 L866.3 631.6 L863.0 636.8 L864.6 638.9 L870.2 636.9 L871.4 640.2 L866.0 642.7Z" fill="#2b2b2b" stroke="#0c0c0c" stroke-width="1.100"/><circle cx="855" cy="645" r="8.5" fill="#272727" stroke="#0c0c0c" stroke-width="1"/>
<path d="M836.500 651.500L854 640 861 650.500 843.500 662.500Z" fill="url(#shaft)"/><ellipse cx="840" cy="657" rx="5.200" ry="6.200" transform="rotate(-35 840 657)" fill="#e6e6e6" stroke="#777" stroke-width="1"/><circle cx="840" cy="657" r="2" fill="#999"/>
<ellipse cx="1120" cy="518" rx="36" ry="42.5" transform="rotate(-18 1120 518)" fill="#252525" stroke="#101010" stroke-width="1.600"/><ellipse cx="1106.0" cy="528.5" rx="36" ry="42.5" transform="rotate(-18 1106.0 528.5)" fill="#252525"/><ellipse cx="1108.0" cy="527.0" rx="36" ry="42.5" transform="rotate(-18 1108.0 527.0)" fill="#252525"/><ellipse cx="1110.0" cy="525.5" rx="36" ry="42.5" transform="rotate(-18 1110.0 525.5)" fill="#252525"/><ellipse cx="1112.0" cy="524.0" rx="36" ry="42.5" transform="rotate(-18 1112.0 524.0)" fill="#252525"/><ellipse cx="1114.0" cy="522.5" rx="36" ry="42.5" transform="rotate(-18 1114.0 522.5)" fill="#252525"/><ellipse cx="1116.0" cy="521.0" rx="36" ry="42.5" transform="rotate(-18 1116.0 521.0)" fill="#252525"/><ellipse cx="1118.0" cy="519.5" rx="36" ry="42.5" transform="rotate(-18 1118.0 519.5)" fill="#252525"/><ellipse cx="1104" cy="530" rx="36" ry="42.5" transform="rotate(-18 1104 530)" fill="#2b2b2b" stroke="#0e0e0e" stroke-width="1.200"/><path d="M1117.8 531.6 L1124.9 533.4 L1124.1 537.3 L1117.0 536.1 L1115.7 538.8 L1120.9 544.1 L1118.4 547.0 L1112.8 542.2 L1110.4 543.9 L1112.4 551.2 L1108.9 552.4 L1106.3 545.4 L1103.4 545.5 L1101.7 552.9 L1098.0 552.1 L1099.2 544.6 L1096.6 543.3 L1091.6 548.8 L1088.8 546.2 L1093.3 540.3 L1091.7 537.7 L1084.8 539.8 L1083.6 536.1 L1090.3 533.4 L1090.2 530.4 L1083.1 528.6 L1083.9 524.7 L1091.0 525.9 L1092.3 523.2 L1087.1 517.9 L1089.6 515.0 L1095.2 519.8 L1097.6 518.1 L1095.6 510.8 L1099.1 509.6 L1101.7 516.6 L1104.6 516.5 L1106.3 509.1 L1110.0 509.9 L1108.8 517.4 L1111.4 518.7 L1116.4 513.2 L1119.2 515.8 L1114.7 521.7 L1116.3 524.3 L1123.2 522.2 L1124.4 525.9 L1117.7 528.6Z" fill="#2b2b2b" stroke="#0c0c0c" stroke-width="1.100"/><circle cx="1104" cy="531" r="10.5" fill="#272727" stroke="#0c0c0c" stroke-width="1"/>
<circle cx="1104" cy="531" r="6.500" fill="#1a1a1a" stroke="#0a0a0a"/><circle cx="1106" cy="529" r="2.500" fill="#666"/>
<ellipse cx="1286" cy="606" rx="53" ry="60" transform="rotate(-18 1286 606)" fill="#252525" stroke="#101010" stroke-width="1.600"/><ellipse cx="1270.2" cy="614.8" rx="53" ry="60" transform="rotate(-18 1270.2 614.8)" fill="#252525"/><ellipse cx="1272.5" cy="613.5" rx="53" ry="60" transform="rotate(-18 1272.5 613.5)" fill="#252525"/><ellipse cx="1274.8" cy="612.2" rx="53" ry="60" transform="rotate(-18 1274.8 612.2)" fill="#252525"/><ellipse cx="1277.0" cy="611.0" rx="53" ry="60" transform="rotate(-18 1277.0 611.0)" fill="#252525"/><ellipse cx="1279.2" cy="609.8" rx="53" ry="60" transform="rotate(-18 1279.2 609.8)" fill="#252525"/><ellipse cx="1281.5" cy="608.5" rx="53" ry="60" transform="rotate(-18 1281.5 608.5)" fill="#252525"/><ellipse cx="1283.8" cy="607.2" rx="53" ry="60" transform="rotate(-18 1283.8 607.2)" fill="#252525"/><ellipse cx="1268" cy="616" rx="53" ry="60" transform="rotate(-18 1268 616)" fill="#2b2b2b" stroke="#0e0e0e" stroke-width="1.200"/><path d="M1284.5 617.7 L1292.8 619.9 L1292.0 624.5 L1283.5 623.1 L1281.9 626.3 L1288.1 632.6 L1285.2 636.1 L1278.5 630.4 L1275.6 632.4 L1278.0 641.0 L1273.8 642.5 L1270.7 634.1 L1267.3 634.3 L1265.2 643.1 L1260.9 642.2 L1262.2 633.2 L1259.1 631.6 L1253.2 638.1 L1249.8 635.0 L1255.3 628.0 L1253.4 625.0 L1245.1 627.5 L1243.7 623.1 L1251.7 619.9 L1251.5 616.3 L1243.2 614.1 L1244.0 609.5 L1252.5 610.9 L1254.1 607.7 L1247.9 601.4 L1250.8 597.9 L1257.5 603.6 L1260.4 601.6 L1258.0 593.0 L1262.2 591.5 L1265.3 599.9 L1268.7 599.7 L1270.8 590.9 L1275.1 591.8 L1273.8 600.8 L1276.9 602.4 L1282.8 595.9 L1286.2 599.0 L1280.7 606.0 L1282.6 609.0 L1290.9 606.5 L1292.3 610.9 L1284.3 614.1Z" fill="#2b2b2b" stroke="#0c0c0c" stroke-width="1.100"/><circle cx="1268" cy="617" r="12.5" fill="#272727" stroke="#0c0c0c" stroke-width="1"/>
<circle cx="1268" cy="617" r="7" fill="#1a1a1a" stroke="#0a0a0a"/><circle cx="1270" cy="615" r="2.800" fill="#777"/>
<circle cx="815" cy="452" r="4" fill="#303233" stroke="#1a1a1a" stroke-width=".7"/><ellipse cx="807" cy="459" rx="7.300" ry="8.700" transform="rotate(-25 807 459)" fill="url(#lbolt)" stroke="#26292b" stroke-width="1"/><circle cx="806" cy="460" r="2.700" fill="#3a3e41" stroke="#24272a" stroke-width=".8"/>
<circle cx="873.5" cy="504.5" r="4" fill="#303233" stroke="#1a1a1a" stroke-width=".7"/><ellipse cx="865.5" cy="511.5" rx="7.300" ry="8.700" transform="rotate(-25 865.5 511.5)" fill="url(#lbolt)" stroke="#26292b" stroke-width="1"/><circle cx="864.5" cy="512.5" r="2.700" fill="#3a3e41" stroke="#24272a" stroke-width=".8"/>
<circle cx="864.5" cy="574" r="4" fill="#303233" stroke="#1a1a1a" stroke-width=".7"/><ellipse cx="856.5" cy="581" rx="7.300" ry="8.700" transform="rotate(-25 856.5 581)" fill="url(#lbolt)" stroke="#26292b" stroke-width="1"/><circle cx="855.5" cy="582" r="2.700" fill="#3a3e41" stroke="#24272a" stroke-width=".8"/>
<circle cx="925" cy="620.6" r="4" fill="#303233" stroke="#1a1a1a" stroke-width=".7"/><ellipse cx="917" cy="627.6" rx="7.300" ry="8.700" transform="rotate(-25 917 627.6)" fill="url(#lbolt)" stroke="#26292b" stroke-width="1"/><circle cx="916" cy="628.6" r="2.700" fill="#3a3e41" stroke="#24272a" stroke-width=".8"/>
<circle cx="897" cy="676" r="4" fill="#303233" stroke="#1a1a1a" stroke-width=".7"/><ellipse cx="889" cy="683" rx="7.300" ry="8.700" transform="rotate(-25 889 683)" fill="url(#lbolt)" stroke="#26292b" stroke-width="1"/><circle cx="888" cy="684" r="2.700" fill="#3a3e41" stroke="#24272a" stroke-width=".8"/>
<circle cx="921.7" cy="457.5" r="3.600" fill="#303232" stroke="#1a1a1a" stroke-width=".7"/><ellipse cx="916.7" cy="461.5" rx="6.6" ry="6.3" fill="#b9bec1" stroke="#3a3a3a" stroke-width=".7"/><ellipse cx="915.2" cy="463" rx="6.6" ry="6.3" fill="#9da3a6"/><ellipse cx="912.7" cy="465" rx="6.5" ry="6.3" fill="#3c3f41" stroke="#17181a" stroke-width="1.100"/><circle cx="912.7" cy="465" r="3.7" fill="#34373a" stroke="#1b1c1e" stroke-width=".9"/><path d="M911.2 463.5l1.500 1.500 2-1.200M912.7 465v2.200" fill="none" stroke="#15161a" stroke-width=".9"/>
<circle cx="1057" cy="687.5" r="3.600" fill="#303232" stroke="#1a1a1a" stroke-width=".7"/><ellipse cx="1052" cy="691.5" rx="6.6" ry="6.3" fill="#b9bec1" stroke="#3a3a3a" stroke-width=".7"/><ellipse cx="1050.5" cy="693" rx="6.6" ry="6.3" fill="#9da3a6"/><ellipse cx="1048" cy="695" rx="6.5" ry="6.3" fill="#3c3f41" stroke="#17181a" stroke-width="1.100"/><circle cx="1048" cy="695" r="3.7" fill="#34373a" stroke="#1b1c1e" stroke-width=".9"/><path d="M1046.5 693.5l1.500 1.500 2-1.200M1048 695v2.200" fill="none" stroke="#15161a" stroke-width=".9"/>
<circle cx="1002.75" cy="710.0" r="3.600" fill="#303232" stroke="#1a1a1a" stroke-width=".7"/><ellipse cx="997.75" cy="714.0" rx="6.6" ry="6.3" fill="#b9bec1" stroke="#3a3a3a" stroke-width=".7"/><ellipse cx="996.25" cy="715.5" rx="6.6" ry="6.3" fill="#9da3a6"/><ellipse cx="993.75" cy="717.5" rx="6.5" ry="6.3" fill="#3c3f41" stroke="#17181a" stroke-width="1.100"/><circle cx="993.75" cy="717.5" r="3.7" fill="#34373a" stroke="#1b1c1e" stroke-width=".9"/><path d="M992.25 716.0l1.500 1.500 2-1.200M993.75 717.5v2.200" fill="none" stroke="#15161a" stroke-width=".9"/>
<circle cx="1051" cy="722.5" r="3.600" fill="#303232" stroke="#1a1a1a" stroke-width=".7"/><ellipse cx="1046" cy="726.5" rx="6.6" ry="6.3" fill="#b9bec1" stroke="#3a3a3a" stroke-width=".7"/><ellipse cx="1044.5" cy="728" rx="6.6" ry="6.3" fill="#9da3a6"/><ellipse cx="1042" cy="730" rx="6.5" ry="6.3" fill="#3c3f41" stroke="#17181a" stroke-width="1.100"/><circle cx="1042" cy="730" r="3.7" fill="#34373a" stroke="#1b1c1e" stroke-width=".9"/><path d="M1040.5 728.5l1.500 1.500 2-1.200M1042 730v2.200" fill="none" stroke="#15161a" stroke-width=".9"/>
<circle cx="1099" cy="736.25" r="3.600" fill="#303232" stroke="#1a1a1a" stroke-width=".7"/><ellipse cx="1094" cy="740.25" rx="6.6" ry="6.3" fill="#b9bec1" stroke="#3a3a3a" stroke-width=".7"/><ellipse cx="1092.5" cy="741.75" rx="6.6" ry="6.3" fill="#9da3a6"/><ellipse cx="1090" cy="743.75" rx="6.5" ry="6.3" fill="#3c3f41" stroke="#17181a" stroke-width="1.100"/><circle cx="1090" cy="743.75" r="3.7" fill="#34373a" stroke="#1b1c1e" stroke-width=".9"/><path d="M1088.5 742.25l1.500 1.500 2-1.200M1090 743.75v2.200" fill="none" stroke="#15161a" stroke-width=".9"/>
<circle cx="1147" cy="750.0" r="3.600" fill="#303232" stroke="#1a1a1a" stroke-width=".7"/><ellipse cx="1142" cy="754.0" rx="6.6" ry="6.3" fill="#b9bec1" stroke="#3a3a3a" stroke-width=".7"/><ellipse cx="1140.5" cy="755.5" rx="6.6" ry="6.3" fill="#9da3a6"/><ellipse cx="1138" cy="757.5" rx="6.5" ry="6.3" fill="#3c3f41" stroke="#17181a" stroke-width="1.100"/><circle cx="1138" cy="757.5" r="3.7" fill="#34373a" stroke="#1b1c1e" stroke-width=".9"/><path d="M1136.5 756.0l1.500 1.500 2-1.200M1138 757.5v2.200" fill="none" stroke="#15161a" stroke-width=".9"/>
<circle cx="1195" cy="764.5" r="3.600" fill="#303232" stroke="#1a1a1a" stroke-width=".7"/><ellipse cx="1190" cy="768.5" rx="6.6" ry="6.3" fill="#b9bec1" stroke="#3a3a3a" stroke-width=".7"/><ellipse cx="1188.5" cy="770" rx="6.6" ry="6.3" fill="#9da3a6"/><ellipse cx="1186" cy="772" rx="6.5" ry="6.3" fill="#3c3f41" stroke="#17181a" stroke-width="1.100"/><circle cx="1186" cy="772" r="3.7" fill="#34373a" stroke="#1b1c1e" stroke-width=".9"/><path d="M1184.5 770.5l1.500 1.500 2-1.200M1186 772v2.200" fill="none" stroke="#15161a" stroke-width=".9"/>
<circle cx="1340" cy="807.0" r="3.600" fill="#303232" stroke="#1a1a1a" stroke-width=".7"/><ellipse cx="1335" cy="811.0" rx="6.6" ry="6.3" fill="#b9bec1" stroke="#3a3a3a" stroke-width=".7"/><ellipse cx="1333.5" cy="812.5" rx="6.6" ry="6.3" fill="#9da3a6"/><ellipse cx="1331" cy="814.5" rx="6.5" ry="6.3" fill="#3c3f41" stroke="#17181a" stroke-width="1.100"/><circle cx="1331" cy="814.5" r="3.7" fill="#34373a" stroke="#1b1c1e" stroke-width=".9"/><path d="M1329.5 813.0l1.500 1.500 2-1.200M1331 814.5v2.200" fill="none" stroke="#15161a" stroke-width=".9"/>
<circle cx="1057" cy="304.5" r="3.600" fill="#303232" stroke="#1a1a1a" stroke-width=".7"/><ellipse cx="1052" cy="308.5" rx="6.6" ry="6.3" fill="#b9bec1" stroke="#3a3a3a" stroke-width=".7"/><ellipse cx="1050.5" cy="310" rx="6.6" ry="6.3" fill="#9da3a6"/><ellipse cx="1048" cy="312" rx="6.5" ry="6.3" fill="#3c3f41" stroke="#17181a" stroke-width="1.100"/><circle cx="1048" cy="312" r="3.7" fill="#34373a" stroke="#1b1c1e" stroke-width=".9"/><path d="M1046.5 310.5l1.500 1.500 2-1.200M1048 312v2.200" fill="none" stroke="#15161a" stroke-width=".9"/>
</svg><svg style="left:0;top:0" width="1651" height="1083" viewBox="268 84 1651 1083">
<polygon points="1147.2,876.2 1243.5,903.8 1243.5,999.5 1187.9,1047.2 1091.6,1020.3 1091.6,924.3" fill="#b8b8b8"/>
<polygon points="1147.2,876.2 1243.5,903.8 1187.9,950.6 1091.6,924.3" fill="#bdbdbd"/>
<polygon points="1147.2,972 1243.5,999.5 1187.9,1047.2 1091.6,1020.3" fill="#b1b1b1"/>
<polygon points="1147.2,939.5 1187.9,950.6 1187.9,983.6 1147.2,972" fill="#a8a8a8"/>
<line x1="1147.2" y1="876.2" x2="1243.5" y2="903.8" stroke="#2a2a2a" stroke-width="1.100"/>
<line x1="1243.5" y1="903.8" x2="1187.9" y2="950.6" stroke="#2a2a2a" stroke-width="1.100"/>
<line x1="1187.9" y1="950.6" x2="1091.6" y2="924.3" stroke="#2a2a2a" stroke-width="1.100"/>
<line x1="1091.6" y1="924.3" x2="1147.2" y2="876.2" stroke="#2a2a2a" stroke-width="1.100"/>
<line x1="1147.2" y1="972" x2="1243.5" y2="999.5" stroke="#2a2a2a" stroke-width="1.100"/>
<line x1="1243.5" y1="999.5" x2="1187.9" y2="1047.2" stroke="#2a2a2a" stroke-width="1.100"/>
<line x1="1187.9" y1="1047.2" x2="1091.6" y2="1020.3" stroke="#2a2a2a" stroke-width="1.100"/>
<line x1="1091.6" y1="1020.3" x2="1147.2" y2="972" stroke="#2a2a2a" stroke-width="1.100"/>
<line x1="1147.2" y1="876.2" x2="1147.2" y2="972" stroke="#2a2a2a" stroke-width="1.100"/>
<line x1="1243.5" y1="903.8" x2="1243.5" y2="999.5" stroke="#2a2a2a" stroke-width="1.100"/>
<line x1="1091.6" y1="924.3" x2="1091.6" y2="1020.3" stroke="#2a2a2a" stroke-width="1.100"/>
<line x1="1187.9" y1="950.6" x2="1187.9" y2="1047.2" stroke="#2a2a2a" stroke-width="1.100"/>
<g fill="#e2e7e7"><path d="M1822 100l7.500 9.500h-15z"/><path d="M1822 262l7.500-9.500h-15z"/><path d="M1741 181l9.500-7.500v15z"/><path d="M1903 181l-9.500-7.500v15z"/></g>
<path d="M1799 111C1785 115 1774 122 1767 131" fill="none" stroke="#e2e7e7" stroke-width="5"/><path d="M1763 137l1-11 9 6.500z" fill="#e2e7e7"/>
<path d="M1845 111C1859 115 1870 122 1877 131" fill="none" stroke="#e2e7e7" stroke-width="5"/><path d="M1881 137l-1-11-9 6.500z" fill="#e2e7e7"/>
<path d="M1821 135.500L1858 150Q1864 153 1864 159V205Q1864 211 1858 214L1834 226Q1829 228.500 1823 226L1785 212Q1779.500 209.500 1779.500 203V163Q1779.500 157 1785 154L1812 137Q1816 134.500 1821 135.500Z" fill="#e2e7e7"/>
<path d="M1820 141L1852 153Q1856 155 1852 158L1832 171Q1828 173 1823 171.500L1792 160.500Q1788 159 1792 156L1814 142Q1817 140 1820 141Z" fill="#fff" opacity=".85"/>
<path d="M1786 168L1820 180Q1824 182 1824 186V216Q1824 221 1819 219.500L1789 208Q1785 206 1785 202V171Q1785 167 1786 168Z" fill="#fff" opacity=".85"/>
<path d="M1834 183L1855 168Q1859 166 1859 170V203Q1859 207 1856 209L1836 219Q1831 221 1831 217V188Q1831 185 1834 183Z" fill="#fff" opacity=".85"/>
<circle cx="1830.500" cy="174.500" r="5" fill="#fff" opacity=".9"/><circle cx="1786" cy="160" r="3.500" fill="#fff" opacity=".8"/><circle cx="1829" cy="223" r="3.500" fill="#fff" opacity=".8"/><circle cx="1858" cy="158" r="3" fill="#fff" opacity=".8"/>
<path d="M1810 188.300V146" stroke="#8f8be0" stroke-width="1" opacity=".8"/><path d="M1810 146V132" stroke="#4a45cf" stroke-width="1.400"/><path d="M1810 172V164" stroke="#6a66d8" stroke-width="1.200"/>
<path d="M1810 188.300L1797 199" stroke="#eaa0ad" stroke-width="1"/><path d="M1797 199L1778 215" stroke="#e0405a" stroke-width="1.400"/>
<path d="M1810 188.300L1858 201.400" stroke="#9bd69e" stroke-width="1"/><path d="M1858 201.400L1865 203.300" stroke="#35a83a" stroke-width="1.400"/><path d="M1828 193.200L1836 195.400" stroke="#5dbb61" stroke-width="1.100"/>
<text x="1809.500" y="128" font-size="14.500" font-weight="bold" fill="#3a35c8" text-anchor="middle" font-family="Liberation Sans, sans-serif">Z</text>
<text x="1772" y="225" font-size="14.500" font-weight="bold" fill="#e0303a" text-anchor="middle" font-family="Liberation Sans, sans-serif">X</text>
<text x="1874.500" y="211.500" font-size="14.500" font-weight="bold" fill="#2aa52a" text-anchor="middle" font-family="Liberation Sans, sans-serif">Y</text>
<text transform="translate(1805.500 196.500) matrix(.97 .26 0 1 0 0)" font-size="11.500" fill="#333" text-anchor="middle" font-family="Liberation Sans, sans-serif">Right</text>
<text transform="translate(1824 150.500) rotate(158) skewX(20)" font-size="8.500" fill="#333" text-anchor="middle" font-family="Liberation Sans, sans-serif">Top</text>
<text transform="translate(1851.500 193.500) rotate(-50) skewX(-12)" font-size="9" fill="#333" text-anchor="middle" font-family="Liberation Sans, sans-serif">Back</text>
<path d="M1862 247.500L1871 243.500 1880.500 247V258L1871.500 262.500 1862 258.500Z" fill="#bbb" stroke="#333" stroke-width="1" stroke-linejoin="round"/><path d="M1862 247.500L1871.500 251 1880.500 247 1871 243.500Z" fill="#eee" stroke="#333" stroke-width=".9" stroke-linejoin="round"/><path d="M1871.500 251V262.500L1862 258.500V247.500Z" fill="#999" stroke="#333" stroke-width=".9" stroke-linejoin="round"/>
<path d="M1890.500 250.500h7l-3.500 4z" fill="#222"/>
<path d="M268 597.500H302.500V632.500H268" fill="#fff" stroke="#ccc" stroke-width="1"/>
<path d="M279.500 609h15M279.500 614h15M279.500 619h15M279.500 624h15" stroke="#333" stroke-width="1.300"/><path d="M277.500 608v17" stroke="#333" stroke-width="1.300"/><path d="M274.500 607l3 3 3-3" fill="none" stroke="#333" stroke-width="1.300"/>
<rect x="1885.500" y="429.500" width="40" height="216" fill="#fff" stroke="#ccc"/>
<path d="M1885.500 465.5H1919" stroke="#ccc"/>
<path d="M1885.500 501.5H1919" stroke="#ccc"/>
<path d="M1885.500 537.5H1919" stroke="#ccc"/>
<path d="M1885.500 573.5H1919" stroke="#ccc"/>
<path d="M1885.500 609.5H1919" stroke="#ccc"/>
<rect x="1885.500" y="657.500" width="40" height="144" fill="#fff" stroke="#ccc"/>
<path d="M1885.500 693.5H1919" stroke="#ccc"/>
<path d="M1885.500 729.5H1919" stroke="#ccc"/>
<path d="M1885.500 765.5H1919" stroke="#ccc"/>
<rect x="1894" y="439.500" width="18" height="17" rx="3" fill="#fff" stroke="#222" stroke-width="1.400"/><path d="M1897.500 444h11M1900 448h8.500M1900 452h8.500" stroke="#222" stroke-width="2"/>
<path d="M1897 480l7-3.500 8 3v9l-7 4-8-3.500z" fill="#fff" stroke="#222" stroke-width="1.100" stroke-linejoin="round"/><path d="M1897 480l8 3.500 7-4M1905 483.500v9" fill="none" stroke="#222" stroke-width="1"/><rect x="1892.500" y="474" width="10" height="8.500" fill="#2a62c9"/><path d="M1896 474v8.500M1899.300 474v8.500M1892.500 477h10M1892.500 479.800h10" stroke="#9bb8ee" stroke-width=".7"/>
<rect x="1893.500" y="511.500" width="5" height="5" rx="1" fill="#999" stroke="#333" stroke-width=".9"/><path d="M1896 518.500v2.500h5" fill="none" stroke="#2a62c9" stroke-width="1.300" stroke-dasharray="2 1"/><path d="M1901 526l3-2.500h2.500v-4l3-2.500h2.500v9.500l-3 3h-8z" fill="#fff" stroke="#333" stroke-width="1" stroke-linejoin="round"/><path d="M1901 526h5.500v-6.500M1906.500 526l3-2.500" fill="none" stroke="#555" stroke-width=".8"/>
<rect x="1893.500" y="558.500" width="18.500" height="7.500" fill="#fff" stroke="#222" stroke-width="1.100"/><rect x="1904.500" y="547" width="7.500" height="19" fill="none" stroke="#2a62c9" stroke-width="1.200" stroke-dasharray="2 1.300"/><circle cx="1908.300" cy="562.300" r="2.600" fill="#fff" stroke="#2a62c9" stroke-width="1"/><circle cx="1908.300" cy="562.300" r="1" fill="#2a62c9"/>
<path d="M1903 583.500l-5 3.500-3 6 3.500 5 4.500 2.500 5-2.500 3.500-5-3-6z" fill="#bcd9f2"/><path d="M1903 583.500l5.500 3.500-5.500 5zM1898 587l5 5-8 1z" fill="#8dc1ea"/><path d="M1895 593l8-1v8.500l-4.500-2.500z" fill="#1b4fae"/><path d="M1903 592l8 1-3.500 5-4.500 2.500z" fill="#999"/><path d="M1903 592l5.500-5 2.500 6z" fill="#d8e8f7"/>
<rect x="1895.500" y="618" width="8" height="7.500" fill="#666"/><path d="M1898.200 618v7.500M1900.900 618v7.500M1895.500 620.500h8M1895.500 623h8" stroke="#ddd" stroke-width=".6"/><text x="1903.500" y="634.500" font-size="17" font-style="italic" font-weight="bold" fill="#222" text-anchor="middle" font-family="Liberation Serif, serif">x</text><path d="M1896.500 620Q1893 628 1896.500 636M1909.500 622Q1912.500 628 1909.500 636" fill="none" stroke="#222" stroke-width="1.600"/>
<rect x="1890" y="662.5" width="26" height="26" rx="3" fill="#ddd"/>
<rect x="1890" y="698.5" width="26" height="26" rx="3" fill="#ddd"/>
<rect x="1890" y="734.5" width="26" height="26" rx="3" fill="#ddd"/>
<rect x="1890" y="770.5" width="26" height="26" rx="3" fill="#ddd"/>
<rect x="1893" y="665.500" width="20" height="20" fill="#1b5fd0" stroke="#123f9a" stroke-width="1"/><text x="1903" y="682" font-size="14" font-weight="bold" fill="#fff" text-anchor="middle" font-family="Liberation Serif, serif" textLength="16" lengthAdjust="spacingAndGlyphs">MK</text>
<rect x="1893" y="706" width="20" height="15" rx="3" fill="#333"/><circle cx="1899" cy="712" r="2.600" fill="#fff" stroke="#3b7be0" stroke-width="1"/><circle cx="1907.500" cy="712" r="2.600" fill="#fff" stroke="#3b7be0" stroke-width="1"/><path d="M1900 717.500q3 2 6 0" fill="none" stroke="#fff" stroke-width="1"/><path d="M1903 706v-5" stroke="#333" stroke-width="1.500"/><path d="M1899 701l1.500 2M1907 701l-1.500 2" stroke="#3b7be0" stroke-width="1"/>
<path d="M1903 737.500l9.500 19.500h-5l-2-4.500q-3 0-5 4.500h-7z" fill="#29a3dc"/><path d="M1903 745l2 5h-4.500z" fill="#ddd"/>
<rect x="1893.500" y="774" width="19.500" height="19.500" fill="#8a5fe0" stroke="#444" stroke-width="1.200"/><path d="M1897 781q4-3 7 1t6-1M1899 788q3 2 6 0" fill="none" stroke="#6f45c8" stroke-width=".9"/>
<ellipse cx="1824" cy="1150" rx="6.500" ry="4.500" fill="#fff" stroke="#222" stroke-width="1.300"/><ellipse cx="1824" cy="1149.500" rx="3.200" ry="1.500" fill="none" stroke="#222" stroke-width="1.100"/><path d="M1830.500 1150v5.500q-2 3-7 3H1813.500v-5.500h10q5 0 7-3" fill="#fff" stroke="#222" stroke-width="1.300" stroke-linejoin="round"/><path d="M1816 1156v2M1818.500 1156v2M1821 1156v2M1823.500 1156v2M1826 1155.500v2" stroke="#222" stroke-width=".9"/>
<path d="M1849.500 1159v-3a10.500 10.500 0 0 1 21 0v3z" fill="#fff" stroke="#222" stroke-width="1.400" stroke-linejoin="round"/><path d="M1854 1156a6 6 0 0 1 12 0h-3.500a2.500 2.500 0 0 0-5 0z" fill="#fff" stroke="#222" stroke-width="1.200" stroke-linejoin="round"/>
<path d="M1892 1144.500h12M1898 1144.500v13M1890 1158.500h16" stroke="#222" stroke-width="1.500"/><path d="M1893.500 1145l-3 9h6zM1902.500 1145l-3 9h6z" fill="none" stroke="#222" stroke-width="1"/><path d="M1890 1154.500h7M1899 1154.500h7" stroke="#222" stroke-width="1.800"/>
</svg></div>
<!--/CANVAS-->
<!--TABS--><div id="tabbar">
<div style="position:absolute;left:-44px;top:-1166px;width:1919px;height:1199px">
<div class="abs" style="left:81px;top:1167px;width:44px;height:32px;background:#e4e6e4"></div>
<svg style="left:53px;top:1175px" width="17" height="17" viewBox="0 0 17 17"><path d="M8.500 0v17M0 8.500h17" stroke="#555" stroke-width="2.600"/></svg>
<svg style="left:90px;top:1170.500px" width="20" height="19" viewBox="0 0 20 19"><path d="M10 .5L.5 9.500h2.300V18.700h5.200v-6h4v6h5.200V9.500h2.300l-3-2.800V1.500h-2.800v2.500z" fill="#666"/></svg>
<svg style="left:112px;top:1167px" width="157" height="31" viewBox="0 0 157 31"><path d="M7 .5h141.500l7 15-7 15H7l7-15z" fill="#fff" stroke="#c8cbc9" stroke-width="1"/></svg>
<div class="t" style="left:141.500px;top:1173px;font-size:14.600px;color:#555">Exercise 3: Sho</div>
<div class="abs" style="left:269px;top:1166px;width:219px;height:33px;background:#fff"></div>
<div class="abs" style="left:269px;top:1195.500px;width:219px;height:2.500px;background:#1b55b0"></div>
<svg style="left:280.5px;top:1171.5px" width="21" height="21" viewBox="0 0 21 21"><path d="M.8 2l2-1.300h12.500l4.700 3.500v14l-2 2H4.500L.8 16.500z" fill="#fff" stroke="#444" stroke-width="1.200" stroke-linejoin="round"/><path d="M.8 2l3.700 3.200h15.500M4.500 5.200v15" fill="none" stroke="#444" stroke-width="1.100"/><path d="M2.500 3h10v10h-10z" fill="#999" stroke="#666" stroke-width=".9"/><path d="M2.500 3l3 2.500h10l-3-2.500M5.500 5.500v10h10v-10" fill="#8a8a8a" stroke="#666" stroke-width=".8"/></svg>
<div class="t" style="left:305px;top:1175px;font-size:15.200px;color:#333">Exercise 3 Assembly</div>
<div class="abs" style="left:489px;top:1166px;width:219px;height:31px;background:#e9eae9;border-radius:0 0 5px 5px"></div>
<svg style="left:502.5px;top:1171.5px" width="20" height="20" viewBox="0 0 20 20"><path d="M9.500 2.500L12 .7h4.500l2.700 1.500v15l-2.300 2H9.500z" fill="#fff" stroke="#555" stroke-width="1.100" stroke-linejoin="round"/><path d="M9.500 2.500l2.500 1h4.700l2.300-1.300M16.800 3.500v15.500" fill="none" stroke="#555" stroke-width="1"/><path d="M.7 7.500L3 5.800h4l2.500 1.200v12.200H3.200L.7 17.500z" fill="#fff" stroke="#555" stroke-width="1.100" stroke-linejoin="round"/><path d="M.7 7.500l2.500 1h6M3.200 8.500v10.500" fill="none" stroke="#555" stroke-width="1"/></svg>
<div class="t" style="left:526px;top:1175px;font-size:15px;color:#555;letter-spacing:-0.05px">Exercise 3 Part Studio</div>
<div class="abs" style="left:710px;top:1166px;width:218px;height:31px;background:#e9eae9;border-radius:0 0 5px 5px"></div>
<svg style="left:722px;top:1171.5px" width="20" height="20" viewBox="0 0 20 20"><path d="M9.500 2.500L12 .7h4.500l2.700 1.500v15l-2.300 2H9.500z" fill="#fff" stroke="#555" stroke-width="1.100" stroke-linejoin="round"/><path d="M9.500 2.500l2.500 1h4.700l2.300-1.300M16.800 3.500v15.500" fill="none" stroke="#555" stroke-width="1"/><path d="M.7 7.500L3 5.800h4l2.500 1.200v12.200H3.200L.7 17.500z" fill="#fff" stroke="#555" stroke-width="1.100" stroke-linejoin="round"/><path d="M.7 7.500l2.500 1h6M3.200 8.500v10.500" fill="none" stroke="#555" stroke-width="1"/></svg>
<div class="t" style="left:746px;top:1175px;font-size:15px;color:#555;letter-spacing:-0.2px">Exercise 3 Game piece</div>
</div></div><!--/TABS-->
</body>
</html>
